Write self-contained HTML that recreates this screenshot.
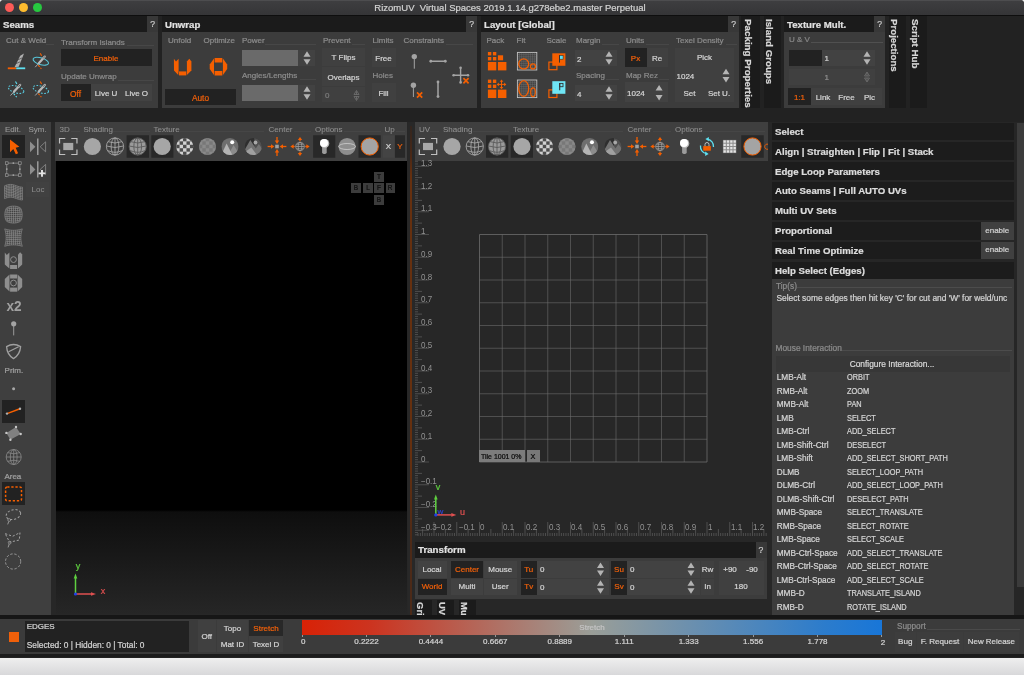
<!DOCTYPE html><html><head><meta charset="utf-8"><title>RizomUV</title>
<style>html,body{margin:0;padding:0;background:#e4e4e6;}#w{position:relative;width:1024px;height:675px;overflow:hidden;font-family:"Liberation Sans", sans-serif;background:#e4e4e6;}#w div,#w svg{position:absolute;box-sizing:border-box;}#w svg{overflow:visible;}#w{will-change:transform;-webkit-font-smoothing:antialiased;-webkit-text-stroke:0.22px;}</style></head><body><div id="w">
<div style="left:0px;top:0px;width:1024px;height:20px;background:#e8e8e8;"></div>
<div style="left:0px;top:657px;width:1024px;height:18px;background:linear-gradient(#f0f0f0,#d8d8da);"></div>
<div style="left:0px;top:0px;width:1024px;height:657.5px;background:#222222;border-radius:4px 4px 0 0;"></div>
<div style="left:0px;top:122px;width:1024px;height:493px;background:#272727;"></div>
<div style="left:0px;top:0px;width:1024px;height:14.8px;background:linear-gradient(#5c5c5e 0,#3e3e40 1px,#353537 100%);border-radius:4px 4px 0 0;"></div>
<div style="left:0px;top:14.8px;width:1024px;height:1.2px;background:#0e0e0e;"></div>
<div style="left:5.4px;top:3.1px;width:9px;height:9px;background:#fc5b57;border-radius:50%;"></div>
<div style="left:19.4px;top:3.1px;width:9px;height:9px;background:#fdbc2e;border-radius:50%;"></div>
<div style="left:33.4px;top:3.1px;width:9px;height:9px;background:#27c840;border-radius:50%;"></div>
<div style="top:0.5px;height:14px;line-height:14px;font-size:9.5px;color:#d2d2d2;white-space:nowrap;left:210px;width:600px;text-align:center;">RizomUV&nbsp; Virtual Spaces 2019.1.14.g278ebe2.master Perpetual</div>
<div style="left:0px;top:16px;width:158px;height:92px;background:#3c3c3c;"></div>
<div style="left:0px;top:16px;width:147px;height:15.75px;background:#1b1b1b;"></div>
<div style="top:17.675px;height:14px;line-height:14px;font-size:9px;color:#e0e0e0;white-space:nowrap;font-weight:700;transform:scaleX(1.07);transform-origin:0 50%;left:3.2px;">Seams</div>
<div style="left:147px;top:16px;width:11px;height:15.75px;background:#383838;"></div>
<div style="top:18.075px;height:12px;line-height:12px;font-size:8.6px;color:#c8c8c8;white-space:nowrap;left:-147.4px;width:600px;text-align:center;">?</div>
<div style="top:34.5px;height:12px;line-height:12px;font-size:8px;color:#8c8c8c;white-space:nowrap;left:6px;">Cut &amp; Weld</div>
<div style="left:46px;top:44px;width:8px;height:1px;background:#474747;"></div>
<div style="top:36.6px;height:12px;line-height:12px;font-size:8px;color:#8c8c8c;white-space:nowrap;left:61px;">Transform Islands</div>
<div style="left:127px;top:45px;width:27px;height:1px;background:#474747;"></div>
<div style="left:60.5px;top:49px;width:91.5px;height:17px;background:#222;"></div>
<div style="top:52.5px;height:12px;line-height:12px;font-size:8px;color:#f0600a;white-space:nowrap;left:-194px;width:600px;text-align:center;">Enable</div>
<div style="top:71.4px;height:12px;line-height:12px;font-size:8px;color:#8c8c8c;white-space:nowrap;left:61px;">Update Unwrap</div>
<div style="left:118px;top:80px;width:36px;height:1px;background:#474747;"></div>
<div style="left:60.5px;top:84px;width:30.5px;height:17px;background:#222;"></div>
<div style="top:87.5px;height:12px;line-height:12px;font-size:8.4px;color:#f0600a;white-space:nowrap;left:-224.5px;width:600px;text-align:center;">Off</div>
<div style="left:91px;top:84px;width:61px;height:17px;background:#424242;"></div>
<div style="top:87.5px;height:12px;line-height:12px;font-size:8px;color:#d4d4d4;white-space:nowrap;left:-194px;width:600px;text-align:center;">Live U</div>
<div style="top:87.5px;height:12px;line-height:12px;font-size:8px;color:#d4d4d4;white-space:nowrap;left:-163.5px;width:600px;text-align:center;">Live O</div>
<div style="left:162px;top:16px;width:315px;height:92px;background:#3c3c3c;"></div>
<div style="left:162px;top:16px;width:304px;height:15.75px;background:#1b1b1b;"></div>
<div style="top:17.675px;height:14px;line-height:14px;font-size:9px;color:#e0e0e0;white-space:nowrap;font-weight:700;transform:scaleX(1.07);transform-origin:0 50%;left:165.2px;">Unwrap</div>
<div style="left:466px;top:16px;width:11px;height:15.75px;background:#383838;"></div>
<div style="top:18.075px;height:12px;line-height:12px;font-size:8.6px;color:#c8c8c8;white-space:nowrap;left:171.60000000000002px;width:600px;text-align:center;">?</div>
<div style="top:34.5px;height:12px;line-height:12px;font-size:8px;color:#8c8c8c;white-space:nowrap;left:168px;">Unfold</div>
<div style="top:34.5px;height:12px;line-height:12px;font-size:8px;color:#8c8c8c;white-space:nowrap;left:203.5px;">Optimize</div>
<div style="top:34.5px;height:12px;line-height:12px;font-size:8px;color:#8c8c8c;white-space:nowrap;left:242px;">Power</div>
<div style="left:265px;top:44px;width:51px;height:1px;background:#474747;"></div>
<div style="left:165px;top:89px;width:71px;height:16px;background:#222;"></div>
<div style="top:92.0px;height:12px;line-height:12px;font-size:8.3px;color:#f0600a;white-space:nowrap;left:-99.5px;width:600px;text-align:center;">Auto</div>
<div style="left:242px;top:50px;width:55.5px;height:15.5px;background:#6a6a6a;"></div>
<div style="left:297.5px;top:50px;width:17px;height:15.5px;background:#424242;"></div>
<svg style="left:0;top:0" width="1024" height="675"><path d="M303.5,56.8 L307,51.3 L310.5,56.8 Z M303.5,59.2 L307,64.7 L310.5,59.2 Z" fill="#b4b4b4"/></svg>
<div style="top:69.5px;height:12px;line-height:12px;font-size:8px;color:#8c8c8c;white-space:nowrap;left:242px;">Angles/Lengths</div>
<div style="left:300px;top:79px;width:16px;height:1px;background:#474747;"></div>
<div style="left:242px;top:85px;width:55.5px;height:15.5px;background:#6a6a6a;"></div>
<div style="left:297.5px;top:85px;width:17px;height:15.5px;background:#424242;"></div>
<svg style="left:0;top:0" width="1024" height="675"><path d="M303.5,91.8 L307,86.3 L310.5,91.8 Z M303.5,94.2 L307,99.7 L310.5,94.2 Z" fill="#b4b4b4"/></svg>
<div style="top:34.5px;height:12px;line-height:12px;font-size:8px;color:#8c8c8c;white-space:nowrap;left:323px;">Prevent</div>
<div style="left:352px;top:44px;width:13px;height:1px;background:#474747;"></div>
<div style="left:322px;top:47.6px;width:43px;height:18.4px;background:#404040;"></div>
<div style="top:51.5px;height:12px;line-height:12px;font-size:8px;color:#d4d4d4;white-space:nowrap;left:43.5px;width:600px;text-align:center;">T Flips</div>
<div style="left:322px;top:67.4px;width:43px;height:18.5px;background:#404040;"></div>
<div style="top:71.5px;height:12px;line-height:12px;font-size:8px;color:#d4d4d4;white-space:nowrap;left:43.5px;width:600px;text-align:center;">Overlaps</div>
<div style="left:322px;top:86.8px;width:43px;height:15.6px;background:#404040;"></div>
<div style="top:89.5px;height:12px;line-height:12px;font-size:8px;color:#7c7c7c;white-space:nowrap;left:325px;">0</div>
<svg style="left:0;top:0" width="1024" height="675"><path d="M354.0,94.5 L356.5,90.5 L359.0,94.5 Z M354.0,96.5 L356.5,100.5 L359.0,96.5 Z M356.5,91.5 V94.5 M356.5,96.5 V99.5" fill="none" stroke="#787878" stroke-width="0.7"/></svg>
<div style="top:34.5px;height:12px;line-height:12px;font-size:8px;color:#8c8c8c;white-space:nowrap;left:372.5px;">Limits</div>
<div style="left:371.5px;top:48.4px;width:24.3px;height:18.5px;background:#404040;"></div>
<div style="top:52.5px;height:12px;line-height:12px;font-size:8px;color:#d4d4d4;white-space:nowrap;left:83.5px;width:600px;text-align:center;">Free</div>
<div style="top:69.5px;height:12px;line-height:12px;font-size:8px;color:#8c8c8c;white-space:nowrap;left:372.5px;">Holes</div>
<div style="left:371.5px;top:82.7px;width:24.3px;height:19.7px;background:#404040;"></div>
<div style="top:87.5px;height:12px;line-height:12px;font-size:8px;color:#d4d4d4;white-space:nowrap;left:83.5px;width:600px;text-align:center;">Fill</div>
<div style="top:34.5px;height:12px;line-height:12px;font-size:8px;color:#8c8c8c;white-space:nowrap;left:403.5px;">Constraints</div>
<div style="left:446px;top:44px;width:27px;height:1px;background:#474747;"></div>
<div style="left:481px;top:16px;width:258px;height:92px;background:#3c3c3c;"></div>
<div style="left:481px;top:16px;width:247px;height:15.75px;background:#1b1b1b;"></div>
<div style="top:17.675px;height:14px;line-height:14px;font-size:9px;color:#e0e0e0;white-space:nowrap;font-weight:700;transform:scaleX(1.07);transform-origin:0 50%;left:484.2px;">Layout [Global]</div>
<div style="left:728px;top:16px;width:11px;height:15.75px;background:#383838;"></div>
<div style="top:18.075px;height:12px;line-height:12px;font-size:8.6px;color:#c8c8c8;white-space:nowrap;left:433.6px;width:600px;text-align:center;">?</div>
<div style="top:34.5px;height:12px;line-height:12px;font-size:8px;color:#8c8c8c;white-space:nowrap;left:486.5px;">Pack</div>
<div style="top:34.5px;height:12px;line-height:12px;font-size:8px;color:#8c8c8c;white-space:nowrap;left:516.5px;">Fit</div>
<div style="top:34.5px;height:12px;line-height:12px;font-size:8px;color:#8c8c8c;white-space:nowrap;left:546.5px;">Scale</div>
<div style="top:34.5px;height:12px;line-height:12px;font-size:8px;color:#8c8c8c;white-space:nowrap;left:576px;">Margin</div>
<div style="left:602px;top:44px;width:17px;height:1px;background:#474747;"></div>
<div style="left:575px;top:50px;width:42px;height:16px;background:#424242;"></div>
<div style="top:53.5px;height:12px;line-height:12px;font-size:8px;color:#d4d4d4;white-space:nowrap;left:577px;">2</div>
<svg style="left:0;top:0" width="1024" height="675"><path d="M605.5,56.8 L609,51.3 L612.5,56.8 Z M605.5,59.2 L609,64.7 L612.5,59.2 Z" fill="#b4b4b4"/></svg>
<div style="top:69.5px;height:12px;line-height:12px;font-size:8px;color:#8c8c8c;white-space:nowrap;left:576px;">Spacing</div>
<div style="left:606px;top:79px;width:13px;height:1px;background:#474747;"></div>
<div style="left:575px;top:85px;width:42px;height:16px;background:#424242;"></div>
<div style="top:88.5px;height:12px;line-height:12px;font-size:8px;color:#d4d4d4;white-space:nowrap;left:577px;">4</div>
<svg style="left:0;top:0" width="1024" height="675"><path d="M605.5,91.8 L609,86.3 L612.5,91.8 Z M605.5,94.2 L609,99.7 L612.5,94.2 Z" fill="#b4b4b4"/></svg>
<div style="top:34.5px;height:12px;line-height:12px;font-size:8px;color:#8c8c8c;white-space:nowrap;left:626px;">Units</div>
<div style="left:646px;top:44px;width:23px;height:1px;background:#474747;"></div>
<div style="left:625px;top:48px;width:21.5px;height:19px;background:#222;"></div>
<div style="top:52.5px;height:12px;line-height:12px;font-size:8px;color:#f0600a;white-space:nowrap;left:335.5px;width:600px;text-align:center;">Px</div>
<div style="left:646.5px;top:48px;width:21.5px;height:19px;background:#404040;"></div>
<div style="top:52.5px;height:12px;line-height:12px;font-size:8px;color:#d4d4d4;white-space:nowrap;left:357px;width:600px;text-align:center;">Re</div>
<div style="top:69.5px;height:12px;line-height:12px;font-size:8px;color:#8c8c8c;white-space:nowrap;left:626px;">Map Rez</div>
<div style="left:659px;top:79px;width:10px;height:1px;background:#474747;"></div>
<div style="left:625px;top:82.4px;width:42.5px;height:20px;background:#424242;"></div>
<div style="top:88.3px;height:12px;line-height:12px;font-size:8px;color:#d4d4d4;white-space:nowrap;left:627px;">1024</div>
<svg style="left:0;top:0" width="1024" height="675"><path d="M655.6,90.4 L659.1,84.9 L662.6,90.4 Z M655.6,95.0 L659.1,100.5 L662.6,95.0 Z" fill="#b4b4b4"/></svg>
<div style="top:34.5px;height:12px;line-height:12px;font-size:8px;color:#8c8c8c;white-space:nowrap;left:676px;">Texel Density</div>
<div style="left:726px;top:44px;width:11px;height:1px;background:#474747;"></div>
<div style="left:675px;top:47.6px;width:59.3px;height:54.6px;background:#404040;"></div>
<div style="top:52.0px;height:12px;line-height:12px;font-size:8px;color:#d4d4d4;white-space:nowrap;left:404.5px;width:600px;text-align:center;">Pick</div>
<div style="top:71.0px;height:12px;line-height:12px;font-size:8px;color:#d4d4d4;white-space:nowrap;left:676.5px;">1024</div>
<svg style="left:0;top:0" width="1024" height="675"><path d="M722.5,74.3 L726,68.8 L729.5,74.3 Z M722.5,77.10000000000001 L726,82.60000000000001 L729.5,77.10000000000001 Z" fill="#b4b4b4"/></svg>
<div style="top:87.5px;height:12px;line-height:12px;font-size:8px;color:#d4d4d4;white-space:nowrap;left:389.5px;width:600px;text-align:center;">Set</div>
<div style="top:87.5px;height:12px;line-height:12px;font-size:8px;color:#d4d4d4;white-space:nowrap;left:419px;width:600px;text-align:center;">Set U.</div>
<div style="left:741px;top:16px;width:19px;height:92px;background:#1b1b1b;"></div>
<div style="left:748.3px;top:19px;font-size:9.8px;color:#d8d8d8;font-weight:700;white-space:nowrap;line-height:12px;height:12px;transform-origin:0 0;transform:rotate(90deg) translate(0,-6px);">Packing Properties</div>
<div style="left:764px;top:16px;width:17px;height:92px;background:#1b1b1b;"></div>
<div style="left:769px;top:19px;font-size:9.7px;color:#d8d8d8;font-weight:700;white-space:nowrap;line-height:12px;height:12px;transform-origin:0 0;transform:rotate(90deg) translate(0,-6px);">Island Groups</div>
<div style="left:784px;top:16px;width:101px;height:92px;background:#3c3c3c;"></div>
<div style="left:784px;top:16px;width:90px;height:15.75px;background:#1b1b1b;"></div>
<div style="top:17.675px;height:14px;line-height:14px;font-size:9px;color:#e0e0e0;white-space:nowrap;font-weight:700;transform:scaleX(1.07);transform-origin:0 50%;left:787.2px;">Texture Mult.</div>
<div style="left:874px;top:16px;width:11px;height:15.75px;background:#383838;"></div>
<div style="top:18.075px;height:12px;line-height:12px;font-size:8.6px;color:#c8c8c8;white-space:nowrap;left:579.6px;width:600px;text-align:center;">?</div>
<div style="top:33.5px;height:12px;line-height:12px;font-size:8px;color:#868686;white-space:nowrap;left:789px;">U &amp; V</div>
<div style="left:811px;top:42px;width:72px;height:1px;background:#505050;"></div>
<div style="left:788.5px;top:50px;width:86.5px;height:16px;background:#424242;"></div>
<div style="left:788.5px;top:50px;width:33px;height:16px;background:#222;"></div>
<div style="top:53.0px;height:12px;line-height:12px;font-size:8px;color:#d4d4d4;white-space:nowrap;left:824.5px;">1</div>
<svg style="left:0;top:0" width="1024" height="675"><path d="M863.5,56.8 L867,51.3 L870.5,56.8 Z M863.5,59.2 L867,64.7 L870.5,59.2 Z" fill="#b4b4b4"/></svg>
<div style="left:788.5px;top:69px;width:86.5px;height:16px;background:#404040;"></div>
<div style="top:71.8px;height:12px;line-height:12px;font-size:8px;color:#909090;white-space:nowrap;left:824.5px;">1</div>
<svg style="left:0;top:0" width="1024" height="675"><path d="M864.5,76 L867,72 L869.5,76 Z M864.5,78 L867,82 L869.5,78 Z M867,73 V76 M867,78 V81" fill="none" stroke="#787878" stroke-width="0.7"/></svg>
<div style="left:788px;top:88px;width:93.8px;height:17px;background:#404040;"></div>
<div style="left:788px;top:88px;width:23px;height:17px;background:#222;"></div>
<div style="top:91.5px;height:12px;line-height:12px;font-size:8px;color:#f0600a;white-space:nowrap;left:499.5px;width:600px;text-align:center;">1:1</div>
<div style="top:91.5px;height:12px;line-height:12px;font-size:8px;color:#d4d4d4;white-space:nowrap;left:523px;width:600px;text-align:center;">Link</div>
<div style="top:91.5px;height:12px;line-height:12px;font-size:8px;color:#d4d4d4;white-space:nowrap;left:546.5px;width:600px;text-align:center;">Free</div>
<div style="top:91.5px;height:12px;line-height:12px;font-size:8px;color:#d4d4d4;white-space:nowrap;left:569.5px;width:600px;text-align:center;">Pic</div>
<div style="left:889px;top:16px;width:17px;height:92px;background:#1b1b1b;"></div>
<div style="left:894px;top:19px;font-size:9.7px;color:#d8d8d8;font-weight:700;white-space:nowrap;line-height:12px;height:12px;transform-origin:0 0;transform:rotate(90deg) translate(0,-6px);">Projections</div>
<div style="left:909.7px;top:16px;width:17px;height:92px;background:#1b1b1b;"></div>
<div style="left:915.3px;top:19px;font-size:9.8px;color:#d8d8d8;font-weight:700;white-space:nowrap;line-height:12px;height:12px;transform-origin:0 0;transform:rotate(90deg) translate(0,-6px);">Script Hub</div>
<div style="left:0px;top:122px;width:51px;height:493px;background:#3f3f3f;"></div>
<div style="top:123.6px;height:12px;line-height:12px;font-size:8px;color:#9a9a9a;white-space:nowrap;left:5px;-webkit-text-stroke:0.1px;">Edit.</div>
<div style="top:123.6px;height:12px;line-height:12px;font-size:8px;color:#9a9a9a;white-space:nowrap;left:28.5px;-webkit-text-stroke:0.1px;">Sym.</div>
<div style="left:2px;top:135px;width:23px;height:23px;background:#222;"></div>
<div style="left:26.4px;top:182.3px;width:23px;height:14.3px;background:#414141;"></div>
<div style="top:183.6px;height:12px;line-height:12px;font-size:8px;color:#8e8e8e;white-space:nowrap;left:-262px;width:600px;text-align:center;-webkit-text-stroke:0;">Loc</div>
<div style="top:365.3px;height:12px;line-height:12px;font-size:8px;color:#a0a0a0;white-space:nowrap;left:4.6px;">Prim.</div>
<div style="top:470.6px;height:12px;line-height:12px;font-size:8px;color:#a0a0a0;white-space:nowrap;left:4.4px;">Area</div>
<div style="left:2px;top:400px;width:23px;height:22.5px;background:#222;"></div>
<div style="left:2px;top:482.3px;width:23px;height:22.6px;background:#222;"></div>
<div style="top:296.6px;height:18px;line-height:18px;font-size:15.3px;color:#a0a0a0;white-space:nowrap;font-weight:700;transform:scaleX(0.89);transform-origin:50% 50%;left:-286.3px;width:600px;text-align:center;-webkit-text-stroke:0;">x2</div>
<div style="left:54.7px;top:122px;width:352.7px;height:39px;background:#3f3f3f;"></div>
<div style="left:55.8px;top:160.5px;width:350.8px;height:453.5px;background:linear-gradient(#000 0,#000 349px,#0e0e0e 351px,#262626 100%);"></div>
<div style="top:123.6px;height:12px;line-height:12px;font-size:8px;color:#8e8e8e;white-space:nowrap;left:59.5px;-webkit-text-stroke:0.1px;">3D</div>
<div style="top:123.6px;height:12px;line-height:12px;font-size:8px;color:#8e8e8e;white-space:nowrap;left:83.5px;-webkit-text-stroke:0.1px;">Shading</div>
<div style="top:123.6px;height:12px;line-height:12px;font-size:8px;color:#8e8e8e;white-space:nowrap;left:153.5px;-webkit-text-stroke:0.1px;">Texture</div>
<div style="top:123.6px;height:12px;line-height:12px;font-size:8px;color:#8e8e8e;white-space:nowrap;left:268.5px;-webkit-text-stroke:0.1px;">Center</div>
<div style="top:123.6px;height:12px;line-height:12px;font-size:8px;color:#8e8e8e;white-space:nowrap;left:315px;-webkit-text-stroke:0.1px;">Options</div>
<div style="top:123.6px;height:12px;line-height:12px;font-size:8px;color:#8e8e8e;white-space:nowrap;left:384.5px;-webkit-text-stroke:0.1px;">Up</div>
<div style="left:70.75px;top:131px;width:8.75px;height:1px;background:#464646;"></div>
<div style="left:113px;top:131px;width:36.5px;height:1px;background:#464646;"></div>
<div style="left:180px;top:131px;width:83.75px;height:1px;background:#464646;"></div>
<div style="left:293.75px;top:131px;width:17.25px;height:1px;background:#464646;"></div>
<div style="left:343.75px;top:131px;width:37.25px;height:1px;background:#464646;"></div>
<div style="left:395.6px;top:131px;width:9.399999999999977px;height:1px;background:#464646;"></div>
<div style="left:374px;top:171.8px;width:10px;height:10.1px;background:#3c3c3c;"></div>
<div style="top:171.05px;height:12px;line-height:12px;font-size:7.6px;color:#0c0c0c;white-space:nowrap;transform:scaleX(0.85);transform-origin:50% 50%;left:79.0px;width:600px;text-align:center;">T</div>
<div style="left:351.3px;top:183.3px;width:9.7px;height:9.9px;background:#3c3c3c;"></div>
<div style="top:182.45px;height:12px;line-height:12px;font-size:7.6px;color:#0c0c0c;white-space:nowrap;transform:scaleX(0.85);transform-origin:50% 50%;left:56.150000000000034px;width:600px;text-align:center;">B</div>
<div style="left:362.9px;top:183.3px;width:9.7px;height:9.9px;background:#3c3c3c;"></div>
<div style="top:182.45px;height:12px;line-height:12px;font-size:7.6px;color:#0c0c0c;white-space:nowrap;transform:scaleX(0.85);transform-origin:50% 50%;left:67.75px;width:600px;text-align:center;">L</div>
<div style="left:374px;top:183.3px;width:10px;height:9.9px;background:#3c3c3c;"></div>
<div style="top:182.45px;height:12px;line-height:12px;font-size:7.6px;color:#0c0c0c;white-space:nowrap;transform:scaleX(0.85);transform-origin:50% 50%;left:79.0px;width:600px;text-align:center;">F</div>
<div style="left:385.7px;top:183.3px;width:9.5px;height:9.9px;background:#3c3c3c;"></div>
<div style="top:182.45px;height:12px;line-height:12px;font-size:7.6px;color:#0c0c0c;white-space:nowrap;transform:scaleX(0.85);transform-origin:50% 50%;left:90.44999999999999px;width:600px;text-align:center;">R</div>
<div style="left:374px;top:194.9px;width:10px;height:9.9px;background:#3c3c3c;"></div>
<div style="top:194.04999999999998px;height:12px;line-height:12px;font-size:7.6px;color:#0c0c0c;white-space:nowrap;transform:scaleX(0.85);transform-origin:50% 50%;left:79.0px;width:600px;text-align:center;">B</div>
<div style="left:414.7px;top:122px;width:353.4px;height:39px;background:#3f3f3f;"></div>
<div style="left:414.7px;top:160.5px;width:353.4px;height:376px;background:#272727;"></div>
<div style="left:407.5px;top:122px;width:7px;height:493px;background:#282828;"></div>
<div style="left:410.2px;top:126px;width:2px;height:489px;background:linear-gradient(#33261f 0,#4a2816 30px,#66300f 50px,#66300f 330px,#4c2a18 420px);"></div>
<div style="top:123.6px;height:12px;line-height:12px;font-size:8px;color:#8e8e8e;white-space:nowrap;left:419px;-webkit-text-stroke:0.1px;">UV</div>
<div style="top:123.6px;height:12px;line-height:12px;font-size:8px;color:#8e8e8e;white-space:nowrap;left:443px;-webkit-text-stroke:0.1px;">Shading</div>
<div style="top:123.6px;height:12px;line-height:12px;font-size:8px;color:#8e8e8e;white-space:nowrap;left:513px;-webkit-text-stroke:0.1px;">Texture</div>
<div style="top:123.6px;height:12px;line-height:12px;font-size:8px;color:#8e8e8e;white-space:nowrap;left:627.5px;-webkit-text-stroke:0.1px;">Center</div>
<div style="top:123.6px;height:12px;line-height:12px;font-size:8px;color:#8e8e8e;white-space:nowrap;left:675px;-webkit-text-stroke:0.1px;">Options</div>
<div style="left:430px;top:131px;width:9px;height:1px;background:#464646;"></div>
<div style="left:472.5px;top:131px;width:36.5px;height:1px;background:#464646;"></div>
<div style="left:539.5px;top:131px;width:83.5px;height:1px;background:#464646;"></div>
<div style="left:653px;top:131px;width:18px;height:1px;background:#464646;"></div>
<div style="left:703px;top:131px;width:62px;height:1px;background:#464646;"></div>
<svg style="left:0;top:0" width="1024" height="675"><path d="M479.5,234.5 V462.0 M479.5,234.5 H707.0" stroke="#6c6c6c" stroke-width="0.8" fill="none"/><path d="M502.25,234.5 V462.0 M479.5,257.25 H707.0" stroke="#6c6c6c" stroke-width="0.6" fill="none"/><path d="M525.0,234.5 V462.0 M479.5,280.0 H707.0" stroke="#6c6c6c" stroke-width="0.6" fill="none"/><path d="M547.75,234.5 V462.0 M479.5,302.75 H707.0" stroke="#6c6c6c" stroke-width="0.6" fill="none"/><path d="M570.5,234.5 V462.0 M479.5,325.5 H707.0" stroke="#6c6c6c" stroke-width="0.6" fill="none"/><path d="M593.25,234.5 V462.0 M479.5,348.25 H707.0" stroke="#6c6c6c" stroke-width="0.6" fill="none"/><path d="M616.0,234.5 V462.0 M479.5,371.0 H707.0" stroke="#6c6c6c" stroke-width="0.6" fill="none"/><path d="M638.75,234.5 V462.0 M479.5,393.75 H707.0" stroke="#6c6c6c" stroke-width="0.6" fill="none"/><path d="M661.5,234.5 V462.0 M479.5,416.5 H707.0" stroke="#6c6c6c" stroke-width="0.6" fill="none"/><path d="M684.25,234.5 V462.0 M479.5,439.25 H707.0" stroke="#6c6c6c" stroke-width="0.6" fill="none"/><path d="M707.0,234.5 V462.0 M479.5,462.0 H707.0" stroke="#6c6c6c" stroke-width="0.8" fill="none"/></svg>
<div style="left:479.1px;top:450px;width:46.4px;height:11.7px;background:#7c7c7c;"></div>
<div style="top:452.0px;height:10px;line-height:10px;font-size:7.2px;color:#0a0a0a;white-space:nowrap;transform:scaleX(0.97);transform-origin:0 50%;left:481.2px;">Tile 1001 0%</div>
<div style="left:526.5px;top:450px;width:13.1px;height:11.7px;background:#787878;"></div>
<div style="top:452.0px;height:10px;line-height:10px;font-size:7.3px;color:#0a0a0a;white-space:nowrap;left:233px;width:600px;text-align:center;">X</div>
<svg style="left:0;top:0" width="1024" height="675"><path d="M415,534.80 h3 M415,532.53 h3 M415,530.25 h14 M415,527.98 h3 M415,525.70 h3 M415,523.42 h3 M415,521.15 h3 M415,518.88 h7 M415,516.60 h3 M415,514.33 h3 M415,512.05 h3 M415,509.77 h3 M415,507.50 h14 M415,505.22 h3 M415,502.95 h3 M415,500.68 h3 M415,498.40 h3 M415,496.12 h7 M415,493.85 h3 M415,491.57 h3 M415,489.30 h3 M415,487.03 h3 M415,484.75 h14 M415,482.48 h3 M415,480.20 h3 M415,477.93 h3 M415,475.65 h3 M415,473.38 h7 M415,471.10 h3 M415,468.83 h3 M415,466.55 h3 M415,464.27 h3 M415,462.00 h14 M415,459.73 h3 M415,457.45 h3 M415,455.17 h3 M415,452.90 h3 M415,450.62 h7 M415,448.35 h3 M415,446.07 h3 M415,443.80 h3 M415,441.52 h3 M415,439.25 h14 M415,436.98 h3 M415,434.70 h3 M415,432.42 h3 M415,430.15 h3 M415,427.88 h7 M415,425.60 h3 M415,423.32 h3 M415,421.05 h3 M415,418.78 h3 M415,416.50 h14 M415,414.23 h3 M415,411.95 h3 M415,409.68 h3 M415,407.40 h3 M415,405.12 h7 M415,402.85 h3 M415,400.57 h3 M415,398.30 h3 M415,396.02 h3 M415,393.75 h14 M415,391.48 h3 M415,389.20 h3 M415,386.92 h3 M415,384.65 h3 M415,382.38 h7 M415,380.10 h3 M415,377.82 h3 M415,375.55 h3 M415,373.27 h3 M415,371.00 h14 M415,368.73 h3 M415,366.45 h3 M415,364.18 h3 M415,361.90 h3 M415,359.62 h7 M415,357.35 h3 M415,355.08 h3 M415,352.80 h3 M415,350.52 h3 M415,348.25 h14 M415,345.98 h3 M415,343.70 h3 M415,341.42 h3 M415,339.15 h3 M415,336.88 h7 M415,334.60 h3 M415,332.33 h3 M415,330.05 h3 M415,327.77 h3 M415,325.50 h14 M415,323.23 h3 M415,320.95 h3 M415,318.68 h3 M415,316.40 h3 M415,314.12 h7 M415,311.85 h3 M415,309.57 h3 M415,307.30 h3 M415,305.02 h3 M415,302.75 h14 M415,300.48 h3 M415,298.20 h3 M415,295.93 h3 M415,293.65 h3 M415,291.38 h7 M415,289.10 h3 M415,286.82 h3 M415,284.55 h3 M415,282.27 h3 M415,280.00 h14 M415,277.72 h3 M415,275.45 h3 M415,273.18 h3 M415,270.90 h3 M415,268.62 h7 M415,266.35 h3 M415,264.07 h3 M415,261.80 h3 M415,259.52 h3 M415,257.25 h14 M415,254.97 h3 M415,252.70 h3 M415,250.42 h3 M415,248.15 h3 M415,245.88 h7 M415,243.60 h3 M415,241.33 h3 M415,239.05 h3 M415,236.78 h3 M415,234.50 h14 M415,232.22 h3 M415,229.95 h3 M415,227.67 h3 M415,225.40 h3 M415,223.12 h7 M415,220.85 h3 M415,218.57 h3 M415,216.30 h3 M415,214.02 h3 M415,211.75 h14 M415,209.47 h3 M415,207.20 h3 M415,204.93 h3 M415,202.65 h3 M415,200.38 h7 M415,198.10 h3 M415,195.83 h3 M415,193.55 h3 M415,191.28 h3 M415,189.00 h14 M415,186.73 h3 M415,184.45 h3 M415,182.18 h3 M415,179.90 h3 M415,177.62 h7 M415,175.35 h3 M415,173.07 h3 M415,170.80 h3 M415,168.52 h3 M415,166.25 h14 M415,163.97 h3 M415,161.70 h3 M418.07,536 v-3 M420.35,536 v-3 M422.62,536 v-7 M424.90,536 v-3 M427.18,536 v-3 M429.45,536 v-3 M431.73,536 v-3 M434.00,536 v-14 M436.27,536 v-3 M438.55,536 v-3 M440.82,536 v-3 M443.10,536 v-3 M445.38,536 v-7 M447.65,536 v-3 M449.93,536 v-3 M452.20,536 v-3 M454.48,536 v-3 M456.75,536 v-14 M459.02,536 v-3 M461.30,536 v-3 M463.57,536 v-3 M465.85,536 v-3 M468.12,536 v-7 M470.40,536 v-3 M472.68,536 v-3 M474.95,536 v-3 M477.23,536 v-3 M479.50,536 v-14 M481.77,536 v-3 M484.05,536 v-3 M486.32,536 v-3 M488.60,536 v-3 M490.88,536 v-7 M493.15,536 v-3 M495.43,536 v-3 M497.70,536 v-3 M499.98,536 v-3 M502.25,536 v-14 M504.52,536 v-3 M506.80,536 v-3 M509.07,536 v-3 M511.35,536 v-3 M513.62,536 v-7 M515.90,536 v-3 M518.17,536 v-3 M520.45,536 v-3 M522.73,536 v-3 M525.00,536 v-14 M527.27,536 v-3 M529.55,536 v-3 M531.83,536 v-3 M534.10,536 v-3 M536.38,536 v-7 M538.65,536 v-3 M540.92,536 v-3 M543.20,536 v-3 M545.48,536 v-3 M547.75,536 v-14 M550.02,536 v-3 M552.30,536 v-3 M554.58,536 v-3 M556.85,536 v-3 M559.12,536 v-7 M561.40,536 v-3 M563.67,536 v-3 M565.95,536 v-3 M568.23,536 v-3 M570.50,536 v-14 M572.77,536 v-3 M575.05,536 v-3 M577.33,536 v-3 M579.60,536 v-3 M581.88,536 v-7 M584.15,536 v-3 M586.42,536 v-3 M588.70,536 v-3 M590.98,536 v-3 M593.25,536 v-14 M595.52,536 v-3 M597.80,536 v-3 M600.08,536 v-3 M602.35,536 v-3 M604.62,536 v-7 M606.90,536 v-3 M609.17,536 v-3 M611.45,536 v-3 M613.73,536 v-3 M616.00,536 v-14 M618.27,536 v-3 M620.55,536 v-3 M622.83,536 v-3 M625.10,536 v-3 M627.38,536 v-7 M629.65,536 v-3 M631.92,536 v-3 M634.20,536 v-3 M636.48,536 v-3 M638.75,536 v-14 M641.02,536 v-3 M643.30,536 v-3 M645.58,536 v-3 M647.85,536 v-3 M650.12,536 v-7 M652.40,536 v-3 M654.67,536 v-3 M656.95,536 v-3 M659.23,536 v-3 M661.50,536 v-14 M663.78,536 v-3 M666.05,536 v-3 M668.33,536 v-3 M670.60,536 v-3 M672.88,536 v-7 M675.15,536 v-3 M677.42,536 v-3 M679.70,536 v-3 M681.98,536 v-3 M684.25,536 v-14 M686.52,536 v-3 M688.80,536 v-3 M691.08,536 v-3 M693.35,536 v-3 M695.62,536 v-7 M697.90,536 v-3 M700.17,536 v-3 M702.45,536 v-3 M704.73,536 v-3 M707.00,536 v-14 M709.27,536 v-3 M711.55,536 v-3 M713.83,536 v-3 M716.10,536 v-3 M718.38,536 v-7 M720.65,536 v-3 M722.92,536 v-3 M725.20,536 v-3 M727.48,536 v-3 M729.75,536 v-14 M732.03,536 v-3 M734.30,536 v-3 M736.58,536 v-3 M738.85,536 v-3 M741.12,536 v-7 M743.40,536 v-3 M745.67,536 v-3 M747.95,536 v-3 M750.22,536 v-3 M752.50,536 v-14 M754.77,536 v-3 M757.05,536 v-3 M759.33,536 v-3 M761.60,536 v-3 M763.88,536 v-7 M766.15,536 v-3 " stroke="#606060" stroke-width="0.7" fill="none"/></svg>
<div style="top:499.0px;height:10px;line-height:10px;font-size:8.5px;color:#929292;white-space:nowrap;transform:scaleX(0.94);transform-origin:0 50%;left:421.3px;-webkit-text-stroke:0;">−0.2</div>
<div style="top:476.25px;height:10px;line-height:10px;font-size:8.5px;color:#929292;white-space:nowrap;transform:scaleX(0.94);transform-origin:0 50%;left:421.3px;-webkit-text-stroke:0;">−0.1</div>
<div style="top:453.5px;height:10px;line-height:10px;font-size:8.5px;color:#929292;white-space:nowrap;transform:scaleX(0.94);transform-origin:0 50%;left:420.8px;-webkit-text-stroke:0;">0</div>
<div style="top:430.75px;height:10px;line-height:10px;font-size:8.5px;color:#929292;white-space:nowrap;transform:scaleX(0.94);transform-origin:0 50%;left:420.8px;-webkit-text-stroke:0;">0.1</div>
<div style="top:408.0px;height:10px;line-height:10px;font-size:8.5px;color:#929292;white-space:nowrap;transform:scaleX(0.94);transform-origin:0 50%;left:420.8px;-webkit-text-stroke:0;">0.2</div>
<div style="top:385.25px;height:10px;line-height:10px;font-size:8.5px;color:#929292;white-space:nowrap;transform:scaleX(0.94);transform-origin:0 50%;left:420.8px;-webkit-text-stroke:0;">0.3</div>
<div style="top:362.5px;height:10px;line-height:10px;font-size:8.5px;color:#929292;white-space:nowrap;transform:scaleX(0.94);transform-origin:0 50%;left:420.8px;-webkit-text-stroke:0;">0.4</div>
<div style="top:339.75px;height:10px;line-height:10px;font-size:8.5px;color:#929292;white-space:nowrap;transform:scaleX(0.94);transform-origin:0 50%;left:420.8px;-webkit-text-stroke:0;">0.5</div>
<div style="top:317.0px;height:10px;line-height:10px;font-size:8.5px;color:#929292;white-space:nowrap;transform:scaleX(0.94);transform-origin:0 50%;left:420.8px;-webkit-text-stroke:0;">0.6</div>
<div style="top:294.25px;height:10px;line-height:10px;font-size:8.5px;color:#929292;white-space:nowrap;transform:scaleX(0.94);transform-origin:0 50%;left:420.8px;-webkit-text-stroke:0;">0.7</div>
<div style="top:271.5px;height:10px;line-height:10px;font-size:8.5px;color:#929292;white-space:nowrap;transform:scaleX(0.94);transform-origin:0 50%;left:420.8px;-webkit-text-stroke:0;">0.8</div>
<div style="top:248.75px;height:10px;line-height:10px;font-size:8.5px;color:#929292;white-space:nowrap;transform:scaleX(0.94);transform-origin:0 50%;left:420.8px;-webkit-text-stroke:0;">0.9</div>
<div style="top:226.0px;height:10px;line-height:10px;font-size:8.5px;color:#929292;white-space:nowrap;transform:scaleX(0.94);transform-origin:0 50%;left:420.8px;-webkit-text-stroke:0;">1</div>
<div style="top:203.24999999999997px;height:10px;line-height:10px;font-size:8.5px;color:#929292;white-space:nowrap;transform:scaleX(0.94);transform-origin:0 50%;left:420.8px;-webkit-text-stroke:0;">1.1</div>
<div style="top:180.5px;height:10px;line-height:10px;font-size:8.5px;color:#929292;white-space:nowrap;transform:scaleX(0.94);transform-origin:0 50%;left:420.8px;-webkit-text-stroke:0;">1.2</div>
<div style="top:157.75px;height:10px;line-height:10px;font-size:8.5px;color:#929292;white-space:nowrap;transform:scaleX(0.94);transform-origin:0 50%;left:420.8px;-webkit-text-stroke:0;">1.3</div>
<div style="top:521.8px;height:10px;line-height:10px;font-size:8.5px;color:#929292;white-space:nowrap;transform:scaleX(0.94);transform-origin:0 50%;left:421px;-webkit-text-stroke:0;">−0.3</div>
<div style="top:521.8px;height:10px;line-height:10px;font-size:8.5px;color:#929292;white-space:nowrap;transform:scaleX(0.94);transform-origin:0 50%;left:436.0px;-webkit-text-stroke:0;">−0.2</div>
<div style="top:521.8px;height:10px;line-height:10px;font-size:8.5px;color:#929292;white-space:nowrap;transform:scaleX(0.94);transform-origin:0 50%;left:458.75px;-webkit-text-stroke:0;">−0.1</div>
<div style="top:521.8px;height:10px;line-height:10px;font-size:8.5px;color:#929292;white-space:nowrap;transform:scaleX(0.94);transform-origin:0 50%;left:480.3px;-webkit-text-stroke:0;">0</div>
<div style="top:521.8px;height:10px;line-height:10px;font-size:8.5px;color:#929292;white-space:nowrap;transform:scaleX(0.94);transform-origin:0 50%;left:503.05px;-webkit-text-stroke:0;">0.1</div>
<div style="top:521.8px;height:10px;line-height:10px;font-size:8.5px;color:#929292;white-space:nowrap;transform:scaleX(0.94);transform-origin:0 50%;left:525.8px;-webkit-text-stroke:0;">0.2</div>
<div style="top:521.8px;height:10px;line-height:10px;font-size:8.5px;color:#929292;white-space:nowrap;transform:scaleX(0.94);transform-origin:0 50%;left:548.55px;-webkit-text-stroke:0;">0.3</div>
<div style="top:521.8px;height:10px;line-height:10px;font-size:8.5px;color:#929292;white-space:nowrap;transform:scaleX(0.94);transform-origin:0 50%;left:571.3px;-webkit-text-stroke:0;">0.4</div>
<div style="top:521.8px;height:10px;line-height:10px;font-size:8.5px;color:#929292;white-space:nowrap;transform:scaleX(0.94);transform-origin:0 50%;left:594.05px;-webkit-text-stroke:0;">0.5</div>
<div style="top:521.8px;height:10px;line-height:10px;font-size:8.5px;color:#929292;white-space:nowrap;transform:scaleX(0.94);transform-origin:0 50%;left:616.8px;-webkit-text-stroke:0;">0.6</div>
<div style="top:521.8px;height:10px;line-height:10px;font-size:8.5px;color:#929292;white-space:nowrap;transform:scaleX(0.94);transform-origin:0 50%;left:639.55px;-webkit-text-stroke:0;">0.7</div>
<div style="top:521.8px;height:10px;line-height:10px;font-size:8.5px;color:#929292;white-space:nowrap;transform:scaleX(0.94);transform-origin:0 50%;left:662.3px;-webkit-text-stroke:0;">0.8</div>
<div style="top:521.8px;height:10px;line-height:10px;font-size:8.5px;color:#929292;white-space:nowrap;transform:scaleX(0.94);transform-origin:0 50%;left:685.05px;-webkit-text-stroke:0;">0.9</div>
<div style="top:521.8px;height:10px;line-height:10px;font-size:8.5px;color:#929292;white-space:nowrap;transform:scaleX(0.94);transform-origin:0 50%;left:707.8px;-webkit-text-stroke:0;">1</div>
<div style="top:521.8px;height:10px;line-height:10px;font-size:8.5px;color:#929292;white-space:nowrap;transform:scaleX(0.94);transform-origin:0 50%;left:730.55px;-webkit-text-stroke:0;">1.1</div>
<div style="top:521.8px;height:10px;line-height:10px;font-size:8.5px;color:#929292;white-space:nowrap;transform:scaleX(0.94);transform-origin:0 50%;left:753.3px;-webkit-text-stroke:0;">1.2</div>
<div style="left:771.5px;top:122px;width:242px;height:494px;background:#262626;"></div>
<div style="left:771.5px;top:122.5px;width:242px;height:17.5px;background:#1c1c1c;"></div>
<div style="top:124.69999999999999px;height:14px;line-height:14px;font-size:9px;color:#dcdcdc;white-space:nowrap;font-weight:700;transform:scaleX(1.07);transform-origin:0 50%;left:774.7px;">Select</div>
<div style="left:771.5px;top:142.4px;width:242px;height:17.5px;background:#1c1c1c;"></div>
<div style="top:144.6px;height:14px;line-height:14px;font-size:9px;color:#dcdcdc;white-space:nowrap;font-weight:700;transform:scaleX(1.07);transform-origin:0 50%;left:774.7px;">Align | Straighten | Flip | Fit | Stack</div>
<div style="left:771.5px;top:162.3px;width:242px;height:17.5px;background:#1c1c1c;"></div>
<div style="top:164.5px;height:14px;line-height:14px;font-size:9px;color:#dcdcdc;white-space:nowrap;font-weight:700;transform:scaleX(1.07);transform-origin:0 50%;left:774.7px;">Edge Loop Parameters</div>
<div style="left:771.5px;top:182.2px;width:242px;height:17.5px;background:#1c1c1c;"></div>
<div style="top:184.39999999999998px;height:14px;line-height:14px;font-size:9px;color:#dcdcdc;white-space:nowrap;font-weight:700;transform:scaleX(1.07);transform-origin:0 50%;left:774.7px;">Auto Seams | Full AUTO UVs</div>
<div style="left:771.5px;top:202.1px;width:242px;height:17.5px;background:#1c1c1c;"></div>
<div style="top:204.29999999999998px;height:14px;line-height:14px;font-size:9px;color:#dcdcdc;white-space:nowrap;font-weight:700;transform:scaleX(1.07);transform-origin:0 50%;left:774.7px;">Multi UV Sets</div>
<div style="left:771.5px;top:222.0px;width:242px;height:17.5px;background:#1c1c1c;"></div>
<div style="top:224.2px;height:14px;line-height:14px;font-size:9px;color:#dcdcdc;white-space:nowrap;font-weight:700;transform:scaleX(1.07);transform-origin:0 50%;left:774.7px;">Proportional</div>
<div style="left:981px;top:222.0px;width:32.5px;height:17.5px;background:#404040;"></div>
<div style="top:224.5px;height:12px;line-height:12px;font-size:8px;color:#d0d0d0;white-space:nowrap;left:697.25px;width:600px;text-align:center;">enable</div>
<div style="left:771.5px;top:241.89999999999998px;width:242px;height:17.5px;background:#1c1c1c;"></div>
<div style="top:244.09999999999997px;height:14px;line-height:14px;font-size:9px;color:#dcdcdc;white-space:nowrap;font-weight:700;transform:scaleX(1.07);transform-origin:0 50%;left:774.7px;">Real Time Optimize</div>
<div style="left:981px;top:241.89999999999998px;width:32.5px;height:17.5px;background:#404040;"></div>
<div style="top:244.39999999999998px;height:12px;line-height:12px;font-size:8px;color:#d0d0d0;white-space:nowrap;left:697.25px;width:600px;text-align:center;">enable</div>
<div style="left:771.5px;top:261.79999999999995px;width:242px;height:17.5px;background:#1c1c1c;"></div>
<div style="top:263.99999999999994px;height:14px;line-height:14px;font-size:9px;color:#dcdcdc;white-space:nowrap;font-weight:700;transform:scaleX(1.07);transform-origin:0 50%;left:774.7px;">Help Select (Edges)</div>
<div style="left:1013.5px;top:122px;width:10.5px;height:493px;background:#262626;"></div>
<div style="left:1017px;top:122.5px;width:7px;height:464px;background:#3b3b3b;"></div>
<div style="left:771.5px;top:278.5px;width:242px;height:336px;background:#3c3c3c;"></div>
<div style="top:279.5px;height:12px;line-height:12px;font-size:8.3px;color:#8c8c8c;white-space:nowrap;left:776px;">Tip(s)</div>
<div style="left:797px;top:287px;width:215px;height:1px;background:#4c4c4c;"></div>
<div style="top:291.5px;height:12px;line-height:12px;font-size:8.4px;color:#d4d4d4;white-space:nowrap;left:776.5px;width:232px;overflow:hidden;">Select some edges then hit key 'C' for cut and 'W' for weld/unc</div>
<div style="top:342.0px;height:12px;line-height:12px;font-size:8.35px;color:#8c8c8c;white-space:nowrap;left:775.5px;">Mouse Interaction</div>
<div style="left:842px;top:350px;width:170px;height:1px;background:#4c4c4c;"></div>
<div style="left:775.5px;top:355.5px;width:234.5px;height:16px;background:#373737;"></div>
<div style="top:357.5px;height:12px;line-height:12px;font-size:8.4px;color:#d8d8d8;white-space:nowrap;left:592px;width:600px;text-align:center;">Configure Interaction...</div>
<div style="top:372.2px;height:12px;line-height:12px;font-size:8.25px;color:#d4d4d4;white-space:nowrap;left:776.7px;">LMB-Alt</div>
<div style="top:372.2px;height:12px;line-height:12px;font-size:8.25px;color:#d4d4d4;white-space:nowrap;transform:scaleX(0.895);transform-origin:0 50%;left:846.5px;">ORBIT</div>
<div style="top:385.7px;height:12px;line-height:12px;font-size:8.25px;color:#d4d4d4;white-space:nowrap;left:776.7px;">RMB-Alt</div>
<div style="top:385.7px;height:12px;line-height:12px;font-size:8.25px;color:#d4d4d4;white-space:nowrap;transform:scaleX(0.895);transform-origin:0 50%;left:846.5px;">ZOOM</div>
<div style="top:399.2px;height:12px;line-height:12px;font-size:8.25px;color:#d4d4d4;white-space:nowrap;left:776.7px;">MMB-Alt</div>
<div style="top:399.2px;height:12px;line-height:12px;font-size:8.25px;color:#d4d4d4;white-space:nowrap;transform:scaleX(0.895);transform-origin:0 50%;left:846.5px;">PAN</div>
<div style="top:412.7px;height:12px;line-height:12px;font-size:8.25px;color:#d4d4d4;white-space:nowrap;left:776.7px;">LMB</div>
<div style="top:412.7px;height:12px;line-height:12px;font-size:8.25px;color:#d4d4d4;white-space:nowrap;transform:scaleX(0.895);transform-origin:0 50%;left:846.5px;">SELECT</div>
<div style="top:426.2px;height:12px;line-height:12px;font-size:8.25px;color:#d4d4d4;white-space:nowrap;left:776.7px;">LMB-Ctrl</div>
<div style="top:426.2px;height:12px;line-height:12px;font-size:8.25px;color:#d4d4d4;white-space:nowrap;transform:scaleX(0.895);transform-origin:0 50%;left:846.5px;">ADD_SELECT</div>
<div style="top:439.7px;height:12px;line-height:12px;font-size:8.25px;color:#d4d4d4;white-space:nowrap;left:776.7px;">LMB-Shift-Ctrl</div>
<div style="top:439.7px;height:12px;line-height:12px;font-size:8.25px;color:#d4d4d4;white-space:nowrap;transform:scaleX(0.895);transform-origin:0 50%;left:846.5px;">DESELECT</div>
<div style="top:453.2px;height:12px;line-height:12px;font-size:8.25px;color:#d4d4d4;white-space:nowrap;left:776.7px;">LMB-Shift</div>
<div style="top:453.2px;height:12px;line-height:12px;font-size:8.25px;color:#d4d4d4;white-space:nowrap;transform:scaleX(0.895);transform-origin:0 50%;left:846.5px;">ADD_SELECT_SHORT_PATH</div>
<div style="top:466.7px;height:12px;line-height:12px;font-size:8.25px;color:#d4d4d4;white-space:nowrap;left:776.7px;">DLMB</div>
<div style="top:466.7px;height:12px;line-height:12px;font-size:8.25px;color:#d4d4d4;white-space:nowrap;transform:scaleX(0.895);transform-origin:0 50%;left:846.5px;">SELECT_LOOP_PATH</div>
<div style="top:480.2px;height:12px;line-height:12px;font-size:8.25px;color:#d4d4d4;white-space:nowrap;left:776.7px;">DLMB-Ctrl</div>
<div style="top:480.2px;height:12px;line-height:12px;font-size:8.25px;color:#d4d4d4;white-space:nowrap;transform:scaleX(0.895);transform-origin:0 50%;left:846.5px;">ADD_SELECT_LOOP_PATH</div>
<div style="top:493.7px;height:12px;line-height:12px;font-size:8.25px;color:#d4d4d4;white-space:nowrap;left:776.7px;">DLMB-Shift-Ctrl</div>
<div style="top:493.7px;height:12px;line-height:12px;font-size:8.25px;color:#d4d4d4;white-space:nowrap;transform:scaleX(0.895);transform-origin:0 50%;left:846.5px;">DESELECT_PATH</div>
<div style="top:507.20000000000005px;height:12px;line-height:12px;font-size:8.25px;color:#d4d4d4;white-space:nowrap;left:776.7px;">MMB-Space</div>
<div style="top:507.20000000000005px;height:12px;line-height:12px;font-size:8.25px;color:#d4d4d4;white-space:nowrap;transform:scaleX(0.895);transform-origin:0 50%;left:846.5px;">SELECT_TRANSLATE</div>
<div style="top:520.7px;height:12px;line-height:12px;font-size:8.25px;color:#d4d4d4;white-space:nowrap;left:776.7px;">RMB-Space</div>
<div style="top:520.7px;height:12px;line-height:12px;font-size:8.25px;color:#d4d4d4;white-space:nowrap;transform:scaleX(0.895);transform-origin:0 50%;left:846.5px;">SELECT_ROTATE</div>
<div style="top:534.2px;height:12px;line-height:12px;font-size:8.25px;color:#d4d4d4;white-space:nowrap;left:776.7px;">LMB-Space</div>
<div style="top:534.2px;height:12px;line-height:12px;font-size:8.25px;color:#d4d4d4;white-space:nowrap;transform:scaleX(0.895);transform-origin:0 50%;left:846.5px;">SELECT_SCALE</div>
<div style="top:547.7px;height:12px;line-height:12px;font-size:8.25px;color:#d4d4d4;white-space:nowrap;left:776.7px;">MMB-Ctrl-Space</div>
<div style="top:547.7px;height:12px;line-height:12px;font-size:8.25px;color:#d4d4d4;white-space:nowrap;transform:scaleX(0.895);transform-origin:0 50%;left:846.5px;">ADD_SELECT_TRANSLATE</div>
<div style="top:561.2px;height:12px;line-height:12px;font-size:8.25px;color:#d4d4d4;white-space:nowrap;left:776.7px;">RMB-Ctrl-Space</div>
<div style="top:561.2px;height:12px;line-height:12px;font-size:8.25px;color:#d4d4d4;white-space:nowrap;transform:scaleX(0.895);transform-origin:0 50%;left:846.5px;">ADD_SELECT_ROTATE</div>
<div style="top:574.7px;height:12px;line-height:12px;font-size:8.25px;color:#d4d4d4;white-space:nowrap;left:776.7px;">LMB-Ctrl-Space</div>
<div style="top:574.7px;height:12px;line-height:12px;font-size:8.25px;color:#d4d4d4;white-space:nowrap;transform:scaleX(0.895);transform-origin:0 50%;left:846.5px;">ADD_SELECT_SCALE</div>
<div style="top:588.2px;height:12px;line-height:12px;font-size:8.25px;color:#d4d4d4;white-space:nowrap;left:776.7px;">MMB-D</div>
<div style="top:588.2px;height:12px;line-height:12px;font-size:8.25px;color:#d4d4d4;white-space:nowrap;transform:scaleX(0.895);transform-origin:0 50%;left:846.5px;">TRANSLATE_ISLAND</div>
<div style="top:601.7px;height:12px;line-height:12px;font-size:8.25px;color:#d4d4d4;white-space:nowrap;left:776.7px;">RMB-D</div>
<div style="top:601.7px;height:12px;line-height:12px;font-size:8.25px;color:#d4d4d4;white-space:nowrap;transform:scaleX(0.895);transform-origin:0 50%;left:846.5px;">ROTATE_ISLAND</div>
<div style="left:414.5px;top:541.5px;width:352px;height:57px;background:#3c3c3c;"></div>
<div style="left:414.5px;top:541.5px;width:341px;height:16px;background:#1b1b1b;"></div>
<div style="top:543.3px;height:14px;line-height:14px;font-size:9px;color:#e2e2e2;white-space:nowrap;font-weight:700;transform:scaleX(1.08);transform-origin:0 50%;left:417.7px;">Transform</div>
<div style="left:755.5px;top:541.5px;width:11px;height:16px;background:#383838;"></div>
<div style="top:543.8px;height:12px;line-height:12px;font-size:8.6px;color:#c8c8c8;white-space:nowrap;left:461px;width:600px;text-align:center;">?</div>
<div style="left:417.5px;top:561px;width:29.0px;height:16.5px;background:#424242;"></div>
<div style="top:563.55px;height:12px;line-height:12px;font-size:8px;color:#d4d4d4;white-space:nowrap;left:132.0px;width:600px;text-align:center;">Local</div>
<div style="left:451px;top:561px;width:32px;height:16.5px;background:#222;"></div>
<div style="top:563.55px;height:12px;line-height:12px;font-size:8px;color:#f0600a;white-space:nowrap;left:167.0px;width:600px;text-align:center;">Center</div>
<div style="left:484px;top:561px;width:32.5px;height:16.5px;background:#424242;"></div>
<div style="top:563.55px;height:12px;line-height:12px;font-size:8px;color:#d4d4d4;white-space:nowrap;left:200.25px;width:600px;text-align:center;">Mouse</div>
<div style="left:417.5px;top:579px;width:29.0px;height:16px;background:#222;"></div>
<div style="top:581.3px;height:12px;line-height:12px;font-size:8px;color:#f0600a;white-space:nowrap;left:132.0px;width:600px;text-align:center;">World</div>
<div style="left:451px;top:579px;width:32px;height:16px;background:#424242;"></div>
<div style="top:581.3px;height:12px;line-height:12px;font-size:8px;color:#d4d4d4;white-space:nowrap;left:167.0px;width:600px;text-align:center;">Multi</div>
<div style="left:484px;top:579px;width:32.5px;height:16px;background:#424242;"></div>
<div style="top:581.3px;height:12px;line-height:12px;font-size:8px;color:#d4d4d4;white-space:nowrap;left:200.25px;width:600px;text-align:center;">User</div>
<div style="left:520.5px;top:561px;width:16.5px;height:16.5px;background:#222;"></div>
<div style="top:563.55px;height:12px;line-height:12px;font-size:8px;color:#f0600a;white-space:nowrap;left:228.75px;width:600px;text-align:center;">Tu</div>
<div style="left:537px;top:561px;width:72px;height:16.5px;background:#424242;"></div>
<div style="top:563.75px;height:12px;line-height:12px;font-size:8px;color:#d4d4d4;white-space:nowrap;left:540px;">0</div>
<svg style="left:0;top:0" width="1024" height="675"><path d="M597.0,568.05 L600.5,562.55 L604.0,568.05 Z M597.0,570.45 L600.5,575.95 L604.0,570.45 Z" fill="#b4b4b4"/></svg>
<div style="left:611px;top:561px;width:16px;height:16.5px;background:#222;"></div>
<div style="top:563.55px;height:12px;line-height:12px;font-size:8px;color:#f0600a;white-space:nowrap;left:319.0px;width:600px;text-align:center;">Su</div>
<div style="left:627px;top:561px;width:73px;height:16.5px;background:#424242;"></div>
<div style="top:563.75px;height:12px;line-height:12px;font-size:8px;color:#d4d4d4;white-space:nowrap;left:630px;">0</div>
<svg style="left:0;top:0" width="1024" height="675"><path d="M687.5,568.05 L691,562.55 L694.5,568.05 Z M687.5,570.45 L691,575.95 L694.5,570.45 Z" fill="#b4b4b4"/></svg>
<div style="left:520.5px;top:579px;width:16.5px;height:16px;background:#222;"></div>
<div style="top:581.3px;height:12px;line-height:12px;font-size:8px;color:#f0600a;white-space:nowrap;left:228.75px;width:600px;text-align:center;">Tv</div>
<div style="left:537px;top:579px;width:72px;height:16px;background:#424242;"></div>
<div style="top:581.5px;height:12px;line-height:12px;font-size:8px;color:#d4d4d4;white-space:nowrap;left:540px;">0</div>
<svg style="left:0;top:0" width="1024" height="675"><path d="M597.0,585.8 L600.5,580.3 L604.0,585.8 Z M597.0,588.2 L600.5,593.7 L604.0,588.2 Z" fill="#b4b4b4"/></svg>
<div style="left:611px;top:579px;width:16px;height:16px;background:#222;"></div>
<div style="top:581.3px;height:12px;line-height:12px;font-size:8px;color:#f0600a;white-space:nowrap;left:319.0px;width:600px;text-align:center;">Sv</div>
<div style="left:627px;top:579px;width:73px;height:16px;background:#424242;"></div>
<div style="top:581.5px;height:12px;line-height:12px;font-size:8px;color:#d4d4d4;white-space:nowrap;left:630px;">0</div>
<svg style="left:0;top:0" width="1024" height="675"><path d="M687.5,585.8 L691,580.3 L694.5,585.8 Z M687.5,588.2 L691,593.7 L694.5,588.2 Z" fill="#b4b4b4"/></svg>
<div style="left:701px;top:561px;width:13px;height:16.5px;background:#404040;"></div>
<div style="top:563.55px;height:12px;line-height:12px;font-size:8px;color:#d4d4d4;white-space:nowrap;left:407.5px;width:600px;text-align:center;">Rw</div>
<div style="left:701px;top:579px;width:13px;height:16px;background:#404040;"></div>
<div style="top:581.3px;height:12px;line-height:12px;font-size:8px;color:#d4d4d4;white-space:nowrap;left:407.5px;width:600px;text-align:center;">In</div>
<div style="left:719px;top:561px;width:44.5px;height:34px;background:#404040;"></div>
<div style="top:563.5px;height:12px;line-height:12px;font-size:8px;color:#d4d4d4;white-space:nowrap;left:430px;width:600px;text-align:center;">+90</div>
<div style="top:563.5px;height:12px;line-height:12px;font-size:8px;color:#d4d4d4;white-space:nowrap;left:452px;width:600px;text-align:center;">-90</div>
<div style="top:581.0px;height:12px;line-height:12px;font-size:8px;color:#d4d4d4;white-space:nowrap;left:441px;width:600px;text-align:center;">180</div>
<div style="left:414.5px;top:599.8px;width:17px;height:15.2px;background:#1b1b1b;overflow:hidden;"><div style="left:5.6px;top:2.4px;font-size:9.5px;color:#d8d8d8;font-weight:700;white-space:nowrap;line-height:12px;height:12px;transform-origin:0 0;transform:rotate(90deg) translate(0,-6px);">Gri</div></div>
<div style="left:436.5px;top:599.8px;width:17px;height:15.2px;background:#1b1b1b;overflow:hidden;"><div style="left:5.6px;top:2.4px;font-size:9.5px;color:#d8d8d8;font-weight:700;white-space:nowrap;line-height:12px;height:12px;transform-origin:0 0;transform:rotate(90deg) translate(0,-6px);">UV</div></div>
<div style="left:458.5px;top:599.8px;width:17px;height:15.2px;background:#1b1b1b;overflow:hidden;"><div style="left:5.6px;top:2.4px;font-size:9.5px;color:#d8d8d8;font-weight:700;white-space:nowrap;line-height:12px;height:12px;transform-origin:0 0;transform:rotate(90deg) translate(0,-6px);">Mu</div></div>
<div style="left:0px;top:615px;width:1024px;height:4px;background:#161616;"></div>
<div style="left:0px;top:618.8px;width:1024px;height:35.5px;background:#3b3b3b;"></div>
<div style="left:0px;top:654.3px;width:1024px;height:3.2px;background:#1c1c1c;"></div>
<div style="left:8.5px;top:631.5px;width:10.5px;height:10.5px;background:#f0600a;"></div>
<div style="left:25px;top:621px;width:163.5px;height:30.5px;background:#222;"></div>
<div style="top:621.3px;height:12px;line-height:12px;font-size:8px;color:#d4d4d4;white-space:nowrap;left:26.7px;">EDGES</div>
<div style="top:638.5px;height:12px;line-height:12px;font-size:8.35px;color:#d4d4d4;white-space:nowrap;left:26.7px;">Selected: 0 | Hidden: 0 | Total: 0</div>
<div style="left:197.5px;top:620px;width:18.5px;height:32px;background:#404040;"></div>
<div style="top:630.5px;height:12px;line-height:12px;font-size:8px;color:#d4d4d4;white-space:nowrap;left:-93.25px;width:600px;text-align:center;">Off</div>
<div style="left:217px;top:620px;width:31px;height:16px;background:#404040;"></div>
<div style="top:622.5px;height:12px;line-height:12px;font-size:8px;color:#d4d4d4;white-space:nowrap;left:-67.5px;width:600px;text-align:center;">Topo</div>
<div style="left:249px;top:620px;width:34px;height:16px;background:#282828;"></div>
<div style="top:622.5px;height:12px;line-height:12px;font-size:8px;color:#f0600a;white-space:nowrap;left:-34px;width:600px;text-align:center;">Stretch</div>
<div style="left:217px;top:636px;width:31px;height:16px;background:#404040;"></div>
<div style="top:638.5px;height:12px;line-height:12px;font-size:8px;color:#d4d4d4;white-space:nowrap;left:-67.5px;width:600px;text-align:center;">Mat ID</div>
<div style="left:249px;top:636px;width:34px;height:16px;background:#404040;"></div>
<div style="top:638.5px;height:12px;line-height:12px;font-size:8px;color:#d4d4d4;white-space:nowrap;left:-34px;width:600px;text-align:center;">Texel D</div>
<div style="left:302px;top:620px;width:580px;height:15px;background:linear-gradient(90deg,#d82206 0%,#cc3420 12%,#9a9e98 50%,#2c7ccc 90%,#1876d8 100%);"></div>
<div style="top:622.0px;height:12px;line-height:12px;font-size:8px;color:#c4c4c4;white-space:nowrap;left:292px;width:600px;text-align:center;">Stretch</div>
<div style="left:302.0px;top:635px;width:1px;height:2px;background:#9a9a9a;"></div>
<div style="top:636.0px;height:12px;line-height:12px;font-size:8px;color:#d4d4d4;white-space:nowrap;left:301px;">0</div>
<div style="left:365.94444444444446px;top:635px;width:1px;height:2px;background:#9a9a9a;"></div>
<div style="top:636.0px;height:12px;line-height:12px;font-size:8px;color:#d4d4d4;white-space:nowrap;left:66.44444444444446px;width:600px;text-align:center;">0.2222</div>
<div style="left:430.3888888888889px;top:635px;width:1px;height:2px;background:#9a9a9a;"></div>
<div style="top:636.0px;height:12px;line-height:12px;font-size:8px;color:#d4d4d4;white-space:nowrap;left:130.8888888888889px;width:600px;text-align:center;">0.4444</div>
<div style="left:494.83333333333337px;top:635px;width:1px;height:2px;background:#9a9a9a;"></div>
<div style="top:636.0px;height:12px;line-height:12px;font-size:8px;color:#d4d4d4;white-space:nowrap;left:195.33333333333337px;width:600px;text-align:center;">0.6667</div>
<div style="left:559.2777777777778px;top:635px;width:1px;height:2px;background:#9a9a9a;"></div>
<div style="top:636.0px;height:12px;line-height:12px;font-size:8px;color:#d4d4d4;white-space:nowrap;left:259.7777777777778px;width:600px;text-align:center;">0.8889</div>
<div style="left:623.7222222222222px;top:635px;width:1px;height:2px;background:#9a9a9a;"></div>
<div style="top:636.0px;height:12px;line-height:12px;font-size:8px;color:#d4d4d4;white-space:nowrap;left:324.2222222222222px;width:600px;text-align:center;">1.111</div>
<div style="left:688.1666666666667px;top:635px;width:1px;height:2px;background:#9a9a9a;"></div>
<div style="top:636.0px;height:12px;line-height:12px;font-size:8px;color:#d4d4d4;white-space:nowrap;left:388.66666666666674px;width:600px;text-align:center;">1.333</div>
<div style="left:752.6111111111111px;top:635px;width:1px;height:2px;background:#9a9a9a;"></div>
<div style="top:636.0px;height:12px;line-height:12px;font-size:8px;color:#d4d4d4;white-space:nowrap;left:453.1111111111111px;width:600px;text-align:center;">1.556</div>
<div style="left:817.0555555555555px;top:635px;width:1px;height:2px;background:#9a9a9a;"></div>
<div style="top:636.0px;height:12px;line-height:12px;font-size:8px;color:#d4d4d4;white-space:nowrap;left:517.5555555555555px;width:600px;text-align:center;">1.778</div>
<div style="left:881.0px;top:635px;width:1px;height:2px;background:#9a9a9a;"></div>
<div style="top:636.5px;height:12px;line-height:12px;font-size:8px;color:#d4d4d4;white-space:nowrap;left:685.3px;width:200px;text-align:right;">2</div>
<div style="top:621.2px;height:12px;line-height:12px;font-size:8.2px;color:#8c8c8c;white-space:nowrap;left:897px;">Support</div>
<div style="left:926.5px;top:628.5px;width:93.5px;height:1px;background:#4a4a4a;"></div>
<div style="left:894.8px;top:631.8px;width:21.2px;height:20.2px;background:#3d3d3d;"></div>
<div style="left:916.8px;top:631.8px;width:46.2px;height:20.2px;background:#3d3d3d;"></div>
<div style="left:964px;top:631.8px;width:55.2px;height:20.2px;background:#3d3d3d;"></div>
<div style="top:636.3px;height:12px;line-height:12px;font-size:8.1px;color:#d4d4d4;white-space:nowrap;left:605.3px;width:600px;text-align:center;">Bug</div>
<div style="top:636.3px;height:12px;line-height:12px;font-size:8.1px;color:#d4d4d4;white-space:nowrap;left:640px;width:600px;text-align:center;">F. Request</div>
<div style="top:636.3px;height:12px;line-height:12px;font-size:7.95px;color:#d4d4d4;white-space:nowrap;left:691.4px;width:600px;text-align:center;">New Release</div>
<svg style="left:0;top:0" width="1024" height="675" viewBox="0 0 1024 675"><path d="M7.8,68.3 H16.2" stroke="#f55f00" stroke-width="1.8"/><path d="M16.2,68.3 H25.2" stroke="#5fe0f0" stroke-width="1.8"/><path d="M14.5,67.3 L18.7,66.7 L24,53.5 L20.2,55.8 Z" fill="#b0b0b0"/><path d="M16,63.6 l4.2,-1.8 M17.9,59.8 l4.2,-1.9" stroke="#444" stroke-width="0.7"/><g transform="translate(40.8,61.2)"><ellipse rx="8" ry="3.4" transform="rotate(17)" fill="none" stroke="#58c8dc" stroke-width="1.1"/><path d="M-0.6,-8 L0.8,-5.4" stroke="#f55f00" stroke-width="1.1"/><path d="M-2.6,4 L0.6,7.6" stroke="#f55f00" stroke-width="1.1" stroke-dasharray="2.2 1.2"/><path d="M-5.6,6 L-1.6,1.6" stroke="#b8b8b8" stroke-width="0.9"/><path d="M-2,2 L4,-4.6" stroke="#b8b8b8" stroke-width="2.3" stroke-linecap="round"/><path d="M2.6,-3 L4,-4.6" stroke="#4a4a4a" stroke-width="0.8" stroke-linecap="round"/></g><g transform="translate(16.1,89.5)"><ellipse rx="8" ry="3.4" transform="rotate(17)" fill="none" stroke="#58c8dc" stroke-width="1.1" stroke-dasharray="1.7 1.5"/><path d="M-0.6,-8 L0.8,-5.4" stroke="#5fe0f0" stroke-width="1.1"/><path d="M-2.6,4 L0.6,7.6" stroke="#5fe0f0" stroke-width="1.1" stroke-dasharray="2.2 1.2"/><path d="M-5.6,6 L-1.6,1.6" stroke="#b8b8b8" stroke-width="0.9"/><path d="M-2,2 L4,-4.6" stroke="#b8b8b8" stroke-width="2.3" stroke-linecap="round"/><path d="M2.6,-3 L4,-4.6" stroke="#4a4a4a" stroke-width="0.8" stroke-linecap="round"/></g><g transform="translate(40.8,89.5)"><ellipse rx="8" ry="3.4" transform="rotate(17)" fill="none" stroke="#58c8dc" stroke-width="1.1" stroke-dasharray="1.7 1.5"/><path d="M-0.6,-8 L0.8,-5.4" stroke="#f55f00" stroke-width="1.1"/><path d="M-2.6,4 L0.6,7.6" stroke="#f55f00" stroke-width="1.1" stroke-dasharray="2.2 1.2"/><path d="M-5.6,6 L-1.6,1.6" stroke="#b8b8b8" stroke-width="0.9"/><path d="M-2,2 L4,-4.6" stroke="#b8b8b8" stroke-width="2.3" stroke-linecap="round"/><path d="M2.6,-3 L4,-4.6" stroke="#4a4a4a" stroke-width="0.8" stroke-linecap="round"/></g><path d="M173.9,58.8 L176,61.5 L178.6,58.8 V71.3 L178.2,75 L174,70.6 Z" fill="#f55f00"/><path d="M179,71.4 H186.3 V75.4 H179 Z" fill="#f55f00"/><path d="M186.9,61.5 L189.3,58.8 L191.4,61.5 V70.6 L186.9,75 Z" fill="#f55f00"/><path d="M209.7,64.5 L214,58.5 V75 L209.7,69 Z" fill="#f55f00"/><path d="M227.2,64.5 L222.9,58.5 V75 L227.2,69 Z" fill="#f55f00"/><path d="M214.6,58.1 H222.3 V62.4 H214.6 Z M214.6,71.1 H222.3 V75.5 H214.6 Z" fill="#f55f00"/><circle cx="414.3" cy="56.6" r="2.7" fill="#a4a4a4"/><path d="M414.3,57 V68.7" stroke="#a4a4a4" stroke-width="1"/><path d="M430.8,61.25 H445.3" stroke="#a4a4a4" stroke-width="1.5"/><circle cx="430.8" cy="61.25" r="1.4" fill="#a4a4a4"/><circle cx="445.3" cy="61.25" r="1.4" fill="#a4a4a4"/><path d="M453.6,75.3 H468 M460.6,67.8 V82.4" stroke="#a4a4a4" stroke-width="1.4"/><circle cx="453.6" cy="75.3" r="1.3" fill="#a4a4a4"/><circle cx="468" cy="75.3" r="1.3" fill="#a4a4a4"/><circle cx="460.6" cy="67.8" r="1.3" fill="#a4a4a4"/><circle cx="460.6" cy="82.4" r="1.3" fill="#a4a4a4"/><path d="M463.4,78.2 L468.6,83.39999999999999 M468.6,78.2 L463.4,83.39999999999999" stroke="#f55f00" stroke-width="1.7"/><circle cx="413.4" cy="85.2" r="2.7" fill="#a4a4a4"/><path d="M413.4,86 V97" stroke="#a4a4a4" stroke-width="1"/><path d="M417.0,92.4 L422.20000000000005,97.6 M422.20000000000005,92.4 L417.0,97.6" stroke="#f55f00" stroke-width="1.7"/><path d="M438,82 V96.6" stroke="#a4a4a4" stroke-width="1.5"/><circle cx="438" cy="82" r="1.4" fill="#a4a4a4"/><circle cx="438" cy="96.6" r="1.4" fill="#a4a4a4"/><rect x="487.9" y="52" width="3.4" height="3.4" fill="#f55f00"/><rect x="492.9" y="52" width="3.4" height="3.4" fill="#f55f00"/><rect x="487.9" y="57" width="3.4" height="3.4" fill="#f55f00"/><rect x="492.9" y="57" width="3.4" height="3.4" fill="#f55f00"/><rect x="487.9" y="62" width="8.4" height="8.4" fill="#f55f00"/><rect x="497.9" y="62" width="8.5" height="8.4" fill="#f55f00"/><rect x="497.9" y="55.3" width="5.2" height="5" fill="#f55f00"/><rect x="487.9" y="79.6" width="3.4" height="3.4" fill="#f55f00"/><rect x="492.9" y="79.6" width="3.4" height="3.4" fill="#f55f00"/><rect x="487.9" y="84.6" width="3.4" height="3.4" fill="#f55f00"/><rect x="492.9" y="84.6" width="3.4" height="3.4" fill="#f55f00"/><rect x="487.9" y="89.6" width="8.4" height="8.4" fill="#f55f00"/><rect x="497.9" y="89.6" width="8.5" height="8.4" fill="#f55f00"/><path d="M498.1,84.39999999999999 H504.9 M501.5,80.99999999999999 V87.8" stroke="#f55f00" stroke-width="1"/><path d="M506.3,84.39999999999999 l-2.2,-1.8 v3.6 Z" fill="#f55f00" transform="rotate(0 501.5 84.39999999999999)"/><path d="M506.3,84.39999999999999 l-2.2,-1.8 v3.6 Z" fill="#f55f00" transform="rotate(90 501.5 84.39999999999999)"/><path d="M506.3,84.39999999999999 l-2.2,-1.8 v3.6 Z" fill="#f55f00" transform="rotate(180 501.5 84.39999999999999)"/><path d="M506.3,84.39999999999999 l-2.2,-1.8 v3.6 Z" fill="#f55f00" transform="rotate(270 501.5 84.39999999999999)"/><rect x="517.4" y="52.4" width="19.4" height="17.6" fill="#424242" stroke="#c4c4c4" stroke-width="0.9"/><path d="M519.55,52.8 v16.8 M521.6999999999999,52.8 v16.8 M523.85,52.8 v16.8 M526.0,52.8 v16.8 M528.15,52.8 v16.8 M530.3,52.8 v16.8 M532.4499999999999,52.8 v16.8 M534.6,52.8 v16.8 M517.8,54.6 h18.6 M517.8,56.8 h18.6 M517.8,59.0 h18.6 M517.8,61.2 h18.6 M517.8,63.4 h18.6 M517.8,65.6 h18.6 M517.8,67.8 h18.6 " stroke="#767676" stroke-width="0.4"/><ellipse cx="523.7" cy="63.9" rx="5" ry="5" fill="none" stroke="#f55f00" stroke-width="1.3"/><ellipse cx="533" cy="66.4" rx="2.5" ry="2.5" fill="none" stroke="#f55f00" stroke-width="1.2"/><rect x="517.4" y="80.0" width="19.4" height="17.6" fill="#424242" stroke="#c4c4c4" stroke-width="0.9"/><path d="M519.55,80.39999999999999 v16.8 M521.6999999999999,80.39999999999999 v16.8 M523.85,80.39999999999999 v16.8 M526.0,80.39999999999999 v16.8 M528.15,80.39999999999999 v16.8 M530.3,80.39999999999999 v16.8 M532.4499999999999,80.39999999999999 v16.8 M534.6,80.39999999999999 v16.8 M517.8,82.2 h18.6 M517.8,84.4 h18.6 M517.8,86.6 h18.6 M517.8,88.8 h18.6 M517.8,91.0 h18.6 M517.8,93.2 h18.6 M517.8,95.4 h18.6 " stroke="#767676" stroke-width="0.4"/><ellipse cx="523.7" cy="88.5" rx="5" ry="7.8" fill="none" stroke="#f55f00" stroke-width="1.3"/><ellipse cx="533" cy="92.3" rx="2.3" ry="4.4" fill="none" stroke="#f55f00" stroke-width="1.2"/><rect x="548.9" y="62.1" width="8" height="7.6" fill="none" stroke="#f55f00" stroke-width="1.2"/><rect x="552.3" y="53.3" width="13.1" height="12.5" fill="#f55f00"/><rect x="559.5" y="55.6" width="3.6" height="3.6" fill="#5fe0f0" stroke="#333" stroke-width="0.6"/><path d="M559.5,55.3 V62.6" stroke="#333" stroke-width="1"/><rect x="548.9" y="89.9" width="8" height="7.6" fill="none" stroke="#f55f00" stroke-width="1.2"/><rect x="552.3" y="81.2" width="13.1" height="12.6" fill="#6fe6f6"/><path d="M559.7,83 V90.3" stroke="#333" stroke-width="1.1"/><rect x="559.7" y="83.4" width="3.3" height="3.3" fill="none" stroke="#333" stroke-width="0.9"/><rect x="63.25" y="142.9" width="10" height="7.2" fill="#a8a8a8"/><path d="M59.55,143.5 V138.5 H65.25 M71.25,138.5 H76.95 V143.5 M76.95,149.5 V154.5 H71.25 M65.25,154.5 H59.55 V149.5" stroke="#c0c0c0" stroke-width="1.2" fill="none"/><circle cx="92.4" cy="146.5" r="8.6" fill="#a6a6a6"/><g fill="none" stroke="#b0b0b0" stroke-width="0.8"><circle cx="115" cy="146.5" r="8.6" fill="none"/><ellipse cx="115" cy="146.5" rx="3.87" ry="8.6"/><path d="M115,137.9 V155.1"/><path d="M106.4,146.0 Q115,149.0 123.6,146.0 M108.12,141.7 Q115,144.3 121.88,141.7 M107.94800000000001,150.7 Q115,153.9 122.05199999999999,150.7"/></g><rect x="126.6" y="135.25" width="22.400000000000006" height="22.5" fill="#282828"/><g fill="none" stroke="#5a5a5a" stroke-width="0.9"><circle cx="137.7" cy="146.5" r="8.6" fill="#9a9a9a"/><ellipse cx="137.7" cy="146.5" rx="3.87" ry="8.6"/><path d="M137.7,137.9 V155.1"/><path d="M129.1,146.0 Q137.7,149.0 146.29999999999998,146.0 M130.82,141.7 Q137.7,144.3 144.57999999999998,141.7 M130.648,150.7 Q137.7,153.9 144.75199999999998,150.7"/></g><rect x="151.3" y="135.25" width="22.099999999999994" height="22.5" fill="#282828"/><circle cx="162.2" cy="146.5" r="8.6" fill="#a6a6a6"/><defs><clipPath id="ck1"><circle cx="184.75" cy="146.5" r="8.6"/></clipPath></defs><g clip-path="url(#ck1)"><rect x="176.15" y="137.9" width="17.2" height="17.2" fill="#d0d0d0"/><rect x="176.15" y="137.90" width="3.44" height="3.44" fill="#4c4c4c"/><rect x="176.15" y="144.78" width="3.44" height="3.44" fill="#4c4c4c"/><rect x="176.15" y="151.66" width="3.44" height="3.44" fill="#4c4c4c"/><rect x="179.59" y="141.34" width="3.44" height="3.44" fill="#4c4c4c"/><rect x="179.59" y="148.22" width="3.44" height="3.44" fill="#4c4c4c"/><rect x="183.03" y="137.90" width="3.44" height="3.44" fill="#4c4c4c"/><rect x="183.03" y="144.78" width="3.44" height="3.44" fill="#4c4c4c"/><rect x="183.03" y="151.66" width="3.44" height="3.44" fill="#4c4c4c"/><rect x="186.47" y="141.34" width="3.44" height="3.44" fill="#4c4c4c"/><rect x="186.47" y="148.22" width="3.44" height="3.44" fill="#4c4c4c"/><rect x="189.91" y="137.90" width="3.44" height="3.44" fill="#4c4c4c"/><rect x="189.91" y="144.78" width="3.44" height="3.44" fill="#4c4c4c"/><rect x="189.91" y="151.66" width="3.44" height="3.44" fill="#4c4c4c"/></g><defs><clipPath id="ck2"><circle cx="207.5" cy="146.5" r="8.6"/></clipPath></defs><g clip-path="url(#ck2)"><rect x="198.9" y="137.9" width="17.2" height="17.2" fill="#8a8a8a"/><rect x="198.90" y="137.90" width="3.44" height="3.44" fill="#787878"/><rect x="198.90" y="144.78" width="3.44" height="3.44" fill="#787878"/><rect x="198.90" y="151.66" width="3.44" height="3.44" fill="#787878"/><rect x="202.34" y="141.34" width="3.44" height="3.44" fill="#787878"/><rect x="202.34" y="148.22" width="3.44" height="3.44" fill="#787878"/><rect x="205.78" y="137.90" width="3.44" height="3.44" fill="#787878"/><rect x="205.78" y="144.78" width="3.44" height="3.44" fill="#787878"/><rect x="205.78" y="151.66" width="3.44" height="3.44" fill="#787878"/><rect x="209.22" y="141.34" width="3.44" height="3.44" fill="#787878"/><rect x="209.22" y="148.22" width="3.44" height="3.44" fill="#787878"/><rect x="212.66" y="137.90" width="3.44" height="3.44" fill="#787878"/><rect x="212.66" y="144.78" width="3.44" height="3.44" fill="#787878"/><rect x="212.66" y="151.66" width="3.44" height="3.44" fill="#787878"/></g><defs><clipPath id="m1"><circle cx="230" cy="146.5" r="8.6"/></clipPath></defs><g clip-path="url(#m1)"><rect x="221.4" y="137.9" width="17.2" height="17.2" fill="#6e6e6e"/><path d="M228,155.5 L233.6,145.0 L240,155.5 Z" fill="#8c8c8c"/><path d="M221,155.5 L226.6,143.5 L232.6,155.5 Z" fill="#b4b4b4"/><circle cx="232.2" cy="142.3" r="2" fill="#ffffff"/></g><defs><clipPath id="m2"><circle cx="253.3" cy="146.5" r="8.6"/></clipPath></defs><g clip-path="url(#m2)"><rect x="244.70000000000002" y="137.9" width="17.2" height="17.2" fill="#2e2e2e"/><path d="M254.3,137.5 H263.3 V156.5 H254.3 Z" fill="#505050"/><path d="M244.3,150.5 L250.3,140.0 L255.8,148.5 L258.8,144.0 L263.3,150.5 V156.5 H244.3 Z" fill="#727272"/><path d="M244.3,152.5 L251.3,147.5 L257.3,155.5 H244.3 Z" fill="#a0a0a0"/><circle cx="255.5" cy="142.5" r="1.9" fill="#a8a8a8"/></g><rect x="275.2" y="144.7" width="3.6" height="3.6" fill="#a0a0a0"/><g transform="rotate(0 277 146.5)"><path d="M286.4,146.5 H282" stroke="#f55f00" stroke-width="1.3"/><path d="M279.6,146.5 l3.4,-2.2 v4.4 Z" fill="#f55f00"/></g><g transform="rotate(90 277 146.5)"><path d="M286.4,146.5 H282" stroke="#f55f00" stroke-width="1.3"/><path d="M279.6,146.5 l3.4,-2.2 v4.4 Z" fill="#f55f00"/></g><g transform="rotate(180 277 146.5)"><path d="M286.4,146.5 H282" stroke="#f55f00" stroke-width="1.3"/><path d="M279.6,146.5 l3.4,-2.2 v4.4 Z" fill="#f55f00"/></g><g transform="rotate(270 277 146.5)"><path d="M286.4,146.5 H282" stroke="#f55f00" stroke-width="1.3"/><path d="M279.6,146.5 l3.4,-2.2 v4.4 Z" fill="#f55f00"/></g><g fill="none" stroke="#a8a8a8" stroke-width="0.7"><circle cx="300" cy="146.5" r="4.3"/><ellipse cx="300" cy="146.5" rx="1.9" ry="4.3"/><path d="M295.7,146.5 H304.3 M296.4,144.2 H303.6 M296.4,148.8 H303.6"/></g><g transform="rotate(0 300 146.5)"><path d="M305.2,146.5 h2" stroke="#f55f00" stroke-width="1.2"/><path d="M309.6,146.5 l-3.2,-2.2 v4.4 Z" fill="#f55f00"/></g><g transform="rotate(90 300 146.5)"><path d="M305.2,146.5 h2" stroke="#f55f00" stroke-width="1.2"/><path d="M309.6,146.5 l-3.2,-2.2 v4.4 Z" fill="#f55f00"/></g><g transform="rotate(180 300 146.5)"><path d="M305.2,146.5 h2" stroke="#f55f00" stroke-width="1.2"/><path d="M309.6,146.5 l-3.2,-2.2 v4.4 Z" fill="#f55f00"/></g><g transform="rotate(270 300 146.5)"><path d="M305.2,146.5 h2" stroke="#f55f00" stroke-width="1.2"/><path d="M309.6,146.5 l-3.2,-2.2 v4.4 Z" fill="#f55f00"/></g><rect x="313.1" y="135.25" width="22.19999999999999" height="22.5" fill="#282828"/><rect x="322.09999999999997" y="145.5" width="4.6" height="8.6" rx="1.8" fill="#9c9c9c"/><circle cx="324.7" cy="143.5" r="4.6" fill="#b8b8b8"/><circle cx="324.0" cy="143.1" r="4" fill="#ffffff"/><circle cx="347.1" cy="146.5" r="8.6" fill="#8e8e8e"/><ellipse cx="347.1" cy="146.5" rx="8.4" ry="3" fill="none" stroke="#c8c8c8" stroke-width="0.9"/><rect x="358.5" y="135.25" width="22.30000000000001" height="22.5" fill="#282828"/><circle cx="369.7" cy="146.5" r="8.6" fill="#a4a4a4" stroke="#f55f00" stroke-width="1"/><rect x="382.8" y="135.25" width="11.6" height="22.5" fill="#444"/><rect x="395" y="135.25" width="10" height="22.5" fill="#282828"/><rect x="423" y="142.9" width="10" height="7.2" fill="#a8a8a8"/><path d="M419.3,143.5 V138.5 H425 M431,138.5 H436.7 V143.5 M436.7,149.5 V154.5 H431 M425,154.5 H419.3 V149.5" stroke="#c0c0c0" stroke-width="1.2" fill="none"/><circle cx="452" cy="146.5" r="8.6" fill="#a6a6a6"/><g fill="none" stroke="#b0b0b0" stroke-width="0.8"><circle cx="474.75" cy="146.5" r="8.6" fill="none"/><ellipse cx="474.75" cy="146.5" rx="3.87" ry="8.6"/><path d="M474.75,137.9 V155.1"/><path d="M466.15,146.0 Q474.75,149.0 483.35,146.0 M467.87,141.7 Q474.75,144.3 481.63,141.7 M467.698,150.7 Q474.75,153.9 481.802,150.7"/></g><rect x="486" y="135.25" width="22.30000000000001" height="22.5" fill="#282828"/><g fill="none" stroke="#5a5a5a" stroke-width="0.9"><circle cx="497" cy="146.5" r="8.6" fill="#9a9a9a"/><ellipse cx="497" cy="146.5" rx="3.87" ry="8.6"/><path d="M497,137.9 V155.1"/><path d="M488.4,146.0 Q497,149.0 505.6,146.0 M490.12,141.7 Q497,144.3 503.88,141.7 M489.948,150.7 Q497,153.9 504.052,150.7"/></g><rect x="510.7" y="135.25" width="22.30000000000001" height="22.5" fill="#282828"/><circle cx="522" cy="146.5" r="8.6" fill="#a6a6a6"/><defs><clipPath id="ck3"><circle cx="544.5" cy="146.5" r="8.6"/></clipPath></defs><g clip-path="url(#ck3)"><rect x="535.9" y="137.9" width="17.2" height="17.2" fill="#d0d0d0"/><rect x="535.90" y="137.90" width="3.44" height="3.44" fill="#4c4c4c"/><rect x="535.90" y="144.78" width="3.44" height="3.44" fill="#4c4c4c"/><rect x="535.90" y="151.66" width="3.44" height="3.44" fill="#4c4c4c"/><rect x="539.34" y="141.34" width="3.44" height="3.44" fill="#4c4c4c"/><rect x="539.34" y="148.22" width="3.44" height="3.44" fill="#4c4c4c"/><rect x="542.78" y="137.90" width="3.44" height="3.44" fill="#4c4c4c"/><rect x="542.78" y="144.78" width="3.44" height="3.44" fill="#4c4c4c"/><rect x="542.78" y="151.66" width="3.44" height="3.44" fill="#4c4c4c"/><rect x="546.22" y="141.34" width="3.44" height="3.44" fill="#4c4c4c"/><rect x="546.22" y="148.22" width="3.44" height="3.44" fill="#4c4c4c"/><rect x="549.66" y="137.90" width="3.44" height="3.44" fill="#4c4c4c"/><rect x="549.66" y="144.78" width="3.44" height="3.44" fill="#4c4c4c"/><rect x="549.66" y="151.66" width="3.44" height="3.44" fill="#4c4c4c"/></g><defs><clipPath id="ck4"><circle cx="567" cy="146.5" r="8.6"/></clipPath></defs><g clip-path="url(#ck4)"><rect x="558.4" y="137.9" width="17.2" height="17.2" fill="#8a8a8a"/><rect x="558.40" y="137.90" width="3.44" height="3.44" fill="#787878"/><rect x="558.40" y="144.78" width="3.44" height="3.44" fill="#787878"/><rect x="558.40" y="151.66" width="3.44" height="3.44" fill="#787878"/><rect x="561.84" y="141.34" width="3.44" height="3.44" fill="#787878"/><rect x="561.84" y="148.22" width="3.44" height="3.44" fill="#787878"/><rect x="565.28" y="137.90" width="3.44" height="3.44" fill="#787878"/><rect x="565.28" y="144.78" width="3.44" height="3.44" fill="#787878"/><rect x="565.28" y="151.66" width="3.44" height="3.44" fill="#787878"/><rect x="568.72" y="141.34" width="3.44" height="3.44" fill="#787878"/><rect x="568.72" y="148.22" width="3.44" height="3.44" fill="#787878"/><rect x="572.16" y="137.90" width="3.44" height="3.44" fill="#787878"/><rect x="572.16" y="144.78" width="3.44" height="3.44" fill="#787878"/><rect x="572.16" y="151.66" width="3.44" height="3.44" fill="#787878"/></g><defs><clipPath id="m3"><circle cx="589.75" cy="146.5" r="8.6"/></clipPath></defs><g clip-path="url(#m3)"><rect x="581.15" y="137.9" width="17.2" height="17.2" fill="#6e6e6e"/><path d="M587.75,155.5 L593.35,145.0 L599.75,155.5 Z" fill="#8c8c8c"/><path d="M580.75,155.5 L586.35,143.5 L592.35,155.5 Z" fill="#b4b4b4"/><circle cx="591.95" cy="142.3" r="2" fill="#ffffff"/></g><defs><clipPath id="m4"><circle cx="613" cy="146.5" r="8.6"/></clipPath></defs><g clip-path="url(#m4)"><rect x="604.4" y="137.9" width="17.2" height="17.2" fill="#2e2e2e"/><path d="M614,137.5 H623 V156.5 H614 Z" fill="#505050"/><path d="M604,150.5 L610,140.0 L615.5,148.5 L618.5,144.0 L623,150.5 V156.5 H604 Z" fill="#727272"/><path d="M604,152.5 L611,147.5 L617,155.5 H604 Z" fill="#a0a0a0"/><circle cx="615.2" cy="142.5" r="1.9" fill="#a8a8a8"/></g><rect x="635.2" y="144.7" width="3.6" height="3.6" fill="#a0a0a0"/><g transform="rotate(0 637 146.5)"><path d="M646.4,146.5 H642" stroke="#f55f00" stroke-width="1.3"/><path d="M639.6,146.5 l3.4,-2.2 v4.4 Z" fill="#f55f00"/></g><g transform="rotate(90 637 146.5)"><path d="M646.4,146.5 H642" stroke="#f55f00" stroke-width="1.3"/><path d="M639.6,146.5 l3.4,-2.2 v4.4 Z" fill="#f55f00"/></g><g transform="rotate(180 637 146.5)"><path d="M646.4,146.5 H642" stroke="#f55f00" stroke-width="1.3"/><path d="M639.6,146.5 l3.4,-2.2 v4.4 Z" fill="#f55f00"/></g><g transform="rotate(270 637 146.5)"><path d="M646.4,146.5 H642" stroke="#f55f00" stroke-width="1.3"/><path d="M639.6,146.5 l3.4,-2.2 v4.4 Z" fill="#f55f00"/></g><g fill="none" stroke="#a8a8a8" stroke-width="0.7"><circle cx="660" cy="146.5" r="4.3"/><ellipse cx="660" cy="146.5" rx="1.9" ry="4.3"/><path d="M655.7,146.5 H664.3 M656.4,144.2 H663.6 M656.4,148.8 H663.6"/></g><g transform="rotate(0 660 146.5)"><path d="M665.2,146.5 h2" stroke="#f55f00" stroke-width="1.2"/><path d="M669.6,146.5 l-3.2,-2.2 v4.4 Z" fill="#f55f00"/></g><g transform="rotate(90 660 146.5)"><path d="M665.2,146.5 h2" stroke="#f55f00" stroke-width="1.2"/><path d="M669.6,146.5 l-3.2,-2.2 v4.4 Z" fill="#f55f00"/></g><g transform="rotate(180 660 146.5)"><path d="M665.2,146.5 h2" stroke="#f55f00" stroke-width="1.2"/><path d="M669.6,146.5 l-3.2,-2.2 v4.4 Z" fill="#f55f00"/></g><g transform="rotate(270 660 146.5)"><path d="M665.2,146.5 h2" stroke="#f55f00" stroke-width="1.2"/><path d="M669.6,146.5 l-3.2,-2.2 v4.4 Z" fill="#f55f00"/></g><rect x="682.1" y="145.5" width="4.6" height="8.6" rx="1.8" fill="#9c9c9c"/><circle cx="684.6999999999999" cy="143.5" r="4.6" fill="#b8b8b8"/><circle cx="684.0" cy="143.1" r="4" fill="#ffffff"/><path d="M700.5,145.5 A7.4,7.4 0 0 0 706.5,153.7" fill="none" stroke="#5fe0f0" stroke-width="1.3"/><path d="M708.6,153.9 l-3.4,-2.4 v4.4 Z" fill="#5fe0f0"/><path d="M713.5,147.0 A7.4,7.4 0 0 0 707.5,139.1" fill="none" stroke="#5fe0f0" stroke-width="1.3"/><path d="M705.4,139.1 l3.4,-2.2 v4.4 Z" fill="#5fe0f0"/><rect x="703.2" y="146.1" width="7.6" height="4.6" fill="#f55f00"/><path d="M705,146.1 v-1.6 a2,2 0 0 1 4,0 v1.6" fill="none" stroke="#c8c8c8" stroke-width="0.9"/><rect x="722.9" y="139.9" width="13.4" height="13.2" fill="#8c8c8c"/><rect x="723.50" y="140.40" width="2.3" height="2.3" fill="#e4e4e4"/><rect x="723.50" y="143.70" width="2.3" height="2.3" fill="#e4e4e4"/><rect x="723.50" y="147.00" width="2.3" height="2.3" fill="#e4e4e4"/><rect x="723.50" y="150.30" width="2.3" height="2.3" fill="#e4e4e4"/><rect x="726.85" y="140.40" width="2.3" height="2.3" fill="#e4e4e4"/><rect x="726.85" y="143.70" width="2.3" height="2.3" fill="#e4e4e4"/><rect x="726.85" y="147.00" width="2.3" height="2.3" fill="#e4e4e4"/><rect x="726.85" y="150.30" width="2.3" height="2.3" fill="#e4e4e4"/><rect x="730.20" y="140.40" width="2.3" height="2.3" fill="#e4e4e4"/><rect x="730.20" y="143.70" width="2.3" height="2.3" fill="#e4e4e4"/><rect x="730.20" y="147.00" width="2.3" height="2.3" fill="#e4e4e4"/><rect x="730.20" y="150.30" width="2.3" height="2.3" fill="#e4e4e4"/><rect x="733.55" y="140.40" width="2.3" height="2.3" fill="#e4e4e4"/><rect x="733.55" y="143.70" width="2.3" height="2.3" fill="#e4e4e4"/><rect x="733.55" y="147.00" width="2.3" height="2.3" fill="#e4e4e4"/><rect x="733.55" y="150.30" width="2.3" height="2.3" fill="#e4e4e4"/><rect x="741.25" y="135.25" width="22.5" height="22.5" fill="#282828"/><circle cx="752.5" cy="146.5" r="8.6" fill="#a4a4a4" stroke="#f55f00" stroke-width="1"/><path d="M768,144.2 a2.6,2.6 0 1 0 0,5" fill="none" stroke="#f55f00" stroke-width="0.9"/><path d="M10,139.6 L19.4,146.7 L15.7,147.7 L18.1,153.2 L15.8,154.3 L13.3,149.1 L10,152.2 Z" fill="#f55f00"/><path d="M30,141.4 L35.4,146.8 L30,152.20000000000002 Z" fill="#8e8e8e"/><path d="M37.8,138.60000000000002 V155.0" stroke="#a8a8a8" stroke-width="1.3"/><path d="M45.6,141.8 L40.2,146.8 L45.6,151.8 Z" fill="none" stroke="#8e8e8e" stroke-width="0.8"/><path d="M30,164.0 L35.4,169.4 L30,174.8 Z" fill="#8e8e8e"/><path d="M37.8,161.20000000000002 V177.6" stroke="#a8a8a8" stroke-width="1.3"/><path d="M45.6,164.4 L40.2,169.4 L45.6,174.4 Z" fill="none" stroke="#8e8e8e" stroke-width="0.8"/><path d="M38.6,173.4 h6.8 M42,170.0 v6.8" stroke="#e4e4e4" stroke-width="1.9"/><rect x="6.8" y="163.1" width="13.1" height="12" fill="none" stroke="#9a9a9a" stroke-width="0.7"/><rect x="5.5" y="161.79999999999998" width="2.6" height="2.6" fill="#3d3d3d" stroke="#a4a4a4" stroke-width="0.6"/><rect x="18.599999999999998" y="161.79999999999998" width="2.6" height="2.6" fill="#3d3d3d" stroke="#a4a4a4" stroke-width="0.6"/><rect x="5.5" y="173.79999999999998" width="2.6" height="2.6" fill="#3d3d3d" stroke="#a4a4a4" stroke-width="0.6"/><rect x="18.599999999999998" y="173.79999999999998" width="2.6" height="2.6" fill="#3d3d3d" stroke="#a4a4a4" stroke-width="0.6"/><circle cx="13.35" cy="163.1" r="0.9" fill="#a4a4a4"/><circle cx="13.35" cy="175.1" r="0.9" fill="#a4a4a4"/><circle cx="6.8" cy="169.1" r="0.9" fill="#a4a4a4"/><circle cx="19.9" cy="169.1" r="0.9" fill="#a4a4a4"/><path d="M4.50,185.80 L4.50,186.87 L4.50,187.93 L4.50,189.00 L4.50,190.07 L4.50,191.13 L4.50,192.20 L4.50,193.27 L4.50,194.33 L4.50,195.40 L4.50,196.47 L4.50,197.53 L4.50,198.60 M4.50,185.80 L6.00,185.26 L7.50,184.81 L9.00,184.51 L10.50,184.40 L12.00,184.51 L13.50,184.81 L15.00,185.26 L16.50,185.80 L18.00,186.34 L19.50,186.79 L21.00,187.09 L22.50,187.20 M6.75,185.02 L6.75,186.09 L6.75,187.16 L6.75,188.22 L6.75,189.29 L6.75,190.36 L6.75,191.42 L6.75,192.49 L6.75,193.56 L6.75,194.62 L6.75,195.69 L6.75,196.76 L6.75,197.82 M4.50,187.40 L6.00,186.86 L7.50,186.41 L9.00,186.11 L10.50,186.00 L12.00,186.11 L13.50,186.41 L15.00,186.86 L16.50,187.40 L18.00,187.94 L19.50,188.39 L21.00,188.69 L22.50,188.80 M9.00,184.51 L9.00,185.57 L9.00,186.64 L9.00,187.71 L9.00,188.77 L9.00,189.84 L9.00,190.91 L9.00,191.97 L9.00,193.04 L9.00,194.11 L9.00,195.17 L9.00,196.24 L9.00,197.31 M4.50,189.00 L6.00,188.46 L7.50,188.01 L9.00,187.71 L10.50,187.60 L12.00,187.71 L13.50,188.01 L15.00,188.46 L16.50,189.00 L18.00,189.54 L19.50,189.99 L21.00,190.29 L22.50,190.40 M11.25,184.43 L11.25,185.49 L11.25,186.56 L11.25,187.63 L11.25,188.69 L11.25,189.76 L11.25,190.83 L11.25,191.89 L11.25,192.96 L11.25,194.03 L11.25,195.09 L11.25,196.16 L11.25,197.23 M4.50,190.60 L6.00,190.06 L7.50,189.61 L9.00,189.31 L10.50,189.20 L12.00,189.31 L13.50,189.61 L15.00,190.06 L16.50,190.60 L18.00,191.14 L19.50,191.59 L21.00,191.89 L22.50,192.00 M13.50,184.81 L13.50,185.88 L13.50,186.94 L13.50,188.01 L13.50,189.08 L13.50,190.14 L13.50,191.21 L13.50,192.28 L13.50,193.34 L13.50,194.41 L13.50,195.48 L13.50,196.54 L13.50,197.61 M4.50,192.20 L6.00,191.66 L7.50,191.21 L9.00,190.91 L10.50,190.80 L12.00,190.91 L13.50,191.21 L15.00,191.66 L16.50,192.20 L18.00,192.74 L19.50,193.19 L21.00,193.49 L22.50,193.60 M15.75,185.53 L15.75,186.59 L15.75,187.66 L15.75,188.73 L15.75,189.79 L15.75,190.86 L15.75,191.93 L15.75,192.99 L15.75,194.06 L15.75,195.13 L15.75,196.19 L15.75,197.26 L15.75,198.33 M4.50,193.80 L6.00,193.26 L7.50,192.81 L9.00,192.51 L10.50,192.40 L12.00,192.51 L13.50,192.81 L15.00,193.26 L16.50,193.80 L18.00,194.34 L19.50,194.79 L21.00,195.09 L22.50,195.20 M18.00,186.34 L18.00,187.40 L18.00,188.47 L18.00,189.54 L18.00,190.60 L18.00,191.67 L18.00,192.74 L18.00,193.80 L18.00,194.87 L18.00,195.94 L18.00,197.00 L18.00,198.07 L18.00,199.14 M4.50,195.40 L6.00,194.86 L7.50,194.41 L9.00,194.11 L10.50,194.00 L12.00,194.11 L13.50,194.41 L15.00,194.86 L16.50,195.40 L18.00,195.94 L19.50,196.39 L21.00,196.69 L22.50,196.80 M20.25,186.96 L20.25,188.03 L20.25,189.10 L20.25,190.16 L20.25,191.23 L20.25,192.30 L20.25,193.36 L20.25,194.43 L20.25,195.50 L20.25,196.56 L20.25,197.63 L20.25,198.70 L20.25,199.76 M4.50,197.00 L6.00,196.46 L7.50,196.01 L9.00,195.71 L10.50,195.60 L12.00,195.71 L13.50,196.01 L15.00,196.46 L16.50,197.00 L18.00,197.54 L19.50,197.99 L21.00,198.29 L22.50,198.40 M22.50,187.20 L22.50,188.27 L22.50,189.33 L22.50,190.40 L22.50,191.47 L22.50,192.53 L22.50,193.60 L22.50,194.67 L22.50,195.73 L22.50,196.80 L22.50,197.87 L22.50,198.93 L22.50,200.00 M4.50,198.60 L6.00,198.06 L7.50,197.61 L9.00,197.31 L10.50,197.20 L12.00,197.31 L13.50,197.61 L15.00,198.06 L16.50,198.60 L18.00,199.14 L19.50,199.59 L21.00,199.89 L22.50,200.00 " fill="none" stroke="#989898" stroke-width="0.55"/><path d="M6.60,207.86 L6.00,208.98 L5.55,210.10 L5.21,211.23 L4.98,212.35 L4.84,213.48 L4.80,214.60 L4.84,215.72 L4.98,216.85 L5.21,217.97 L5.55,219.10 L6.00,220.22 L6.60,221.34 M6.60,207.86 L7.75,207.27 L8.90,206.83 L10.05,206.50 L11.20,206.28 L12.35,206.14 L13.50,206.10 L14.65,206.14 L15.80,206.28 L16.95,206.50 L18.10,206.83 L19.25,207.27 L20.40,207.86 M8.32,207.04 L7.88,208.30 L7.54,209.56 L7.28,210.82 L7.11,212.08 L7.01,213.34 L6.98,214.60 L7.01,215.86 L7.11,217.12 L7.28,218.38 L7.54,219.64 L7.88,220.90 L8.32,222.16 M5.76,209.54 L7.05,209.11 L8.34,208.77 L9.63,208.53 L10.92,208.36 L12.21,208.26 L13.50,208.22 L14.79,208.26 L16.08,208.36 L17.37,208.53 L18.66,208.77 L19.95,209.11 L21.24,209.54 M10.05,206.50 L9.75,207.85 L9.52,209.20 L9.36,210.55 L9.24,211.90 L9.17,213.25 L9.15,214.60 L9.17,215.95 L9.24,217.30 L9.36,218.65 L9.52,220.00 L9.75,221.35 L10.05,222.70 M5.21,211.23 L6.59,210.94 L7.98,210.72 L9.36,210.55 L10.74,210.44 L12.12,210.37 L13.50,210.35 L14.88,210.37 L16.26,210.44 L17.64,210.55 L19.02,210.72 L20.41,210.94 L21.79,211.23 M11.77,206.20 L11.63,207.60 L11.51,209.00 L11.43,210.40 L11.37,211.80 L11.34,213.20 L11.32,214.60 L11.34,216.00 L11.37,217.40 L11.43,218.80 L11.51,220.20 L11.63,221.60 L11.77,223.00 M4.90,212.91 L6.33,212.77 L7.77,212.66 L9.20,212.58 L10.63,212.52 L12.07,212.49 L13.50,212.47 L14.93,212.49 L16.37,212.52 L17.80,212.58 L19.23,212.66 L20.67,212.77 L22.10,212.91 M13.50,206.10 L13.50,207.52 L13.50,208.93 L13.50,210.35 L13.50,211.77 L13.50,213.18 L13.50,214.60 L13.50,216.02 L13.50,217.43 L13.50,218.85 L13.50,220.27 L13.50,221.68 L13.50,223.10 M4.80,214.60 L6.25,214.60 L7.70,214.60 L9.15,214.60 L10.60,214.60 L12.05,214.60 L13.50,214.60 L14.95,214.60 L16.40,214.60 L17.85,214.60 L19.30,214.60 L20.75,214.60 L22.20,214.60 M15.23,206.20 L15.37,207.60 L15.49,209.00 L15.57,210.40 L15.63,211.80 L15.66,213.20 L15.68,214.60 L15.66,216.00 L15.63,217.40 L15.57,218.80 L15.49,220.20 L15.37,221.60 L15.23,223.00 M4.90,216.29 L6.33,216.43 L7.77,216.54 L9.20,216.62 L10.63,216.68 L12.07,216.71 L13.50,216.72 L14.93,216.71 L16.37,216.68 L17.80,216.62 L19.23,216.54 L20.67,216.43 L22.10,216.29 M16.95,206.50 L17.25,207.85 L17.48,209.20 L17.64,210.55 L17.76,211.90 L17.83,213.25 L17.85,214.60 L17.83,215.95 L17.76,217.30 L17.64,218.65 L17.48,220.00 L17.25,221.35 L16.95,222.70 M5.21,217.97 L6.59,218.26 L7.98,218.48 L9.36,218.65 L10.74,218.76 L12.12,218.83 L13.50,218.85 L14.88,218.83 L16.26,218.76 L17.64,218.65 L19.02,218.48 L20.41,218.26 L21.79,217.97 M18.68,207.04 L19.12,208.30 L19.46,209.56 L19.72,210.82 L19.89,212.08 L19.99,213.34 L20.02,214.60 L19.99,215.86 L19.89,217.12 L19.72,218.38 L19.46,219.64 L19.12,220.90 L18.68,222.16 M5.76,219.66 L7.05,220.09 L8.34,220.43 L9.63,220.67 L10.92,220.84 L12.21,220.94 L13.50,220.97 L14.79,220.94 L16.08,220.84 L17.37,220.67 L18.66,220.43 L19.95,220.09 L21.24,219.66 M20.40,207.86 L21.00,208.98 L21.45,210.10 L21.79,211.23 L22.02,212.35 L22.16,213.48 L22.20,214.60 L22.16,215.72 L22.02,216.85 L21.79,217.97 L21.45,219.10 L21.00,220.22 L20.40,221.34 M6.60,221.34 L7.75,221.93 L8.90,222.37 L10.05,222.70 L11.20,222.92 L12.35,223.06 L13.50,223.10 L14.65,223.06 L15.80,222.92 L16.95,222.70 L18.10,222.37 L19.25,221.93 L20.40,221.34 " fill="none" stroke="#989898" stroke-width="0.55"/><path d="M4.70,228.90 L5.13,230.35 L5.48,231.80 L5.76,233.25 L5.95,234.70 L6.07,236.15 L6.11,237.60 L6.07,239.05 L5.95,240.50 L5.76,241.95 L5.48,243.40 L5.13,244.85 L4.70,246.30 M4.70,228.90 L6.17,229.33 L7.63,229.67 L9.10,229.94 L10.57,230.14 L12.03,230.25 L13.50,230.29 L14.97,230.25 L16.43,230.14 L17.90,229.94 L19.37,229.67 L20.83,229.33 L22.30,228.90 M6.90,229.51 L7.22,230.86 L7.49,232.21 L7.69,233.55 L7.84,234.90 L7.93,236.25 L7.96,237.60 L7.93,238.95 L7.84,240.30 L7.69,241.65 L7.49,242.99 L7.22,244.34 L6.90,245.69 M5.32,231.07 L6.68,231.39 L8.04,231.66 L9.41,231.86 L10.77,232.00 L12.14,232.09 L13.50,232.12 L14.86,232.09 L16.23,232.00 L17.59,231.86 L18.96,231.66 L20.32,231.39 L21.68,231.07 M9.10,229.94 L9.32,231.22 L9.49,232.50 L9.63,233.77 L9.73,235.05 L9.78,236.32 L9.80,237.60 L9.78,238.88 L9.73,240.15 L9.63,241.43 L9.49,242.70 L9.32,243.98 L9.10,245.26 M5.76,233.25 L7.05,233.46 L8.34,233.64 L9.63,233.77 L10.92,233.87 L12.21,233.93 L13.50,233.95 L14.79,233.93 L16.08,233.87 L17.37,233.77 L18.66,233.64 L19.95,233.46 L21.24,233.25 M11.30,230.20 L11.41,231.44 L11.50,232.67 L11.56,233.90 L11.61,235.13 L11.64,236.37 L11.65,237.60 L11.64,238.83 L11.61,240.06 L11.56,241.30 L11.50,242.53 L11.41,243.76 L11.30,245.00 M6.02,235.42 L7.27,235.53 L8.51,235.62 L9.76,235.69 L11.01,235.73 L12.25,235.76 L13.50,235.77 L14.75,235.76 L15.99,235.73 L17.24,235.69 L18.49,235.62 L19.73,235.53 L20.98,235.42 M13.50,230.29 L13.50,231.51 L13.50,232.73 L13.50,233.95 L13.50,235.16 L13.50,236.38 L13.50,237.60 L13.50,238.82 L13.50,240.04 L13.50,241.25 L13.50,242.47 L13.50,243.69 L13.50,244.91 M6.11,237.60 L7.34,237.60 L8.57,237.60 L9.80,237.60 L11.04,237.60 L12.27,237.60 L13.50,237.60 L14.73,237.60 L15.96,237.60 L17.20,237.60 L18.43,237.60 L19.66,237.60 L20.89,237.60 M15.70,230.20 L15.59,231.44 L15.50,232.67 L15.44,233.90 L15.39,235.13 L15.36,236.37 L15.35,237.60 L15.36,238.83 L15.39,240.06 L15.44,241.30 L15.50,242.53 L15.59,243.76 L15.70,245.00 M6.02,239.78 L7.27,239.67 L8.51,239.58 L9.76,239.51 L11.01,239.47 L12.25,239.44 L13.50,239.43 L14.75,239.44 L15.99,239.47 L17.24,239.51 L18.49,239.58 L19.73,239.67 L20.98,239.78 M17.90,229.94 L17.68,231.22 L17.51,232.50 L17.37,233.77 L17.27,235.05 L17.22,236.32 L17.20,237.60 L17.22,238.88 L17.27,240.15 L17.37,241.43 L17.51,242.70 L17.68,243.98 L17.90,245.26 M5.76,241.95 L7.05,241.74 L8.34,241.56 L9.63,241.43 L10.92,241.33 L12.21,241.27 L13.50,241.25 L14.79,241.27 L16.08,241.33 L17.37,241.43 L18.66,241.56 L19.95,241.74 L21.24,241.95 M20.10,229.51 L19.78,230.86 L19.51,232.21 L19.31,233.55 L19.16,234.90 L19.07,236.25 L19.04,237.60 L19.07,238.95 L19.16,240.30 L19.31,241.65 L19.51,242.99 L19.78,244.34 L20.10,245.69 M5.32,244.12 L6.68,243.81 L8.04,243.54 L9.41,243.34 L10.77,243.20 L12.14,243.11 L13.50,243.08 L14.86,243.11 L16.23,243.20 L17.59,243.34 L18.96,243.54 L20.32,243.81 L21.68,244.12 M22.30,228.90 L21.87,230.35 L21.52,231.80 L21.24,233.25 L21.05,234.70 L20.93,236.15 L20.89,237.60 L20.93,239.05 L21.05,240.50 L21.24,241.95 L21.52,243.40 L21.87,244.85 L22.30,246.30 M4.70,246.30 L6.17,245.87 L7.63,245.53 L9.10,245.26 L10.57,245.06 L12.03,244.95 L13.50,244.91 L14.97,244.95 L16.43,245.06 L17.90,245.26 L19.37,245.53 L20.83,245.87 L22.30,246.30 " fill="none" stroke="#989898" stroke-width="0.55"/><path d="M4.8,252.40000000000003 L6.8,255.00000000000003 L9.4,252.40000000000003 V268.6 L4.8,264.40000000000003 Z" fill="#8e8e8e"/><path d="M22.2,254.60000000000002 L20.2,252.20000000000002 L18,254.60000000000002 V268.6 L22.2,264.40000000000003 Z" fill="#8e8e8e"/><rect x="10.1" y="265.0" width="7" height="4" fill="#8e8e8e"/><circle cx="13.5" cy="259.6" r="2.9" fill="none" stroke="#8e8e8e" stroke-width="1"/><path d="M4.8,279 L9.5,274.4 V291.6 L4.8,287 Z" fill="#8e8e8e"/><path d="M22.2,279 L17.6,274.4 V291.6 L22.2,287 Z" fill="#8e8e8e"/><rect x="10.1" y="274.5" width="7" height="4" fill="#8e8e8e"/><rect x="10.1" y="287.6" width="7" height="4.1" fill="#8e8e8e"/><circle cx="13.5" cy="283" r="2.9" fill="none" stroke="#8e8e8e" stroke-width="1"/><circle cx="13.7" cy="323.8" r="2.6" fill="#a4a4a4"/><path d="M13.7,324 V335.4" stroke="#a4a4a4" stroke-width="0.9"/><path d="M6.6,346.6 Q13.5,342.4 20.6,346.6 Q20,354.6 13.5,358.6 Q7,354.6 6.6,346.6 Z" fill="none" stroke="#a0a0a0" stroke-width="1.3"/><path d="M8.6,351.8 L18.6,346.8" stroke="#a0a0a0" stroke-width="1.2"/><circle cx="13.6" cy="388.7" r="1.5" fill="#a8a8a8"/><path d="M7,413.6 L20,408.8" stroke="#f55f00" stroke-width="1.5"/><circle cx="7" cy="413.6" r="1.2" fill="#b0b0b0"/><circle cx="20" cy="408.8" r="1.2" fill="#b0b0b0"/><path d="M6.4,432.9 L16,426.9 L20.7,434 L10.4,439.7 Z" fill="#808080"/><circle cx="6.4" cy="432.9" r="1.2" fill="#c8c8c8"/><circle cx="16" cy="426.9" r="1.2" fill="#c8c8c8"/><circle cx="20.7" cy="434" r="1.2" fill="#c8c8c8"/><circle cx="10.4" cy="439.7" r="1.2" fill="#c8c8c8"/><g fill="none" stroke="#8e8e8e" stroke-width="0.75"><circle cx="13.7" cy="457" r="7.5"/><ellipse cx="13.7" cy="457" rx="3.4" ry="7.5"/><path d="M13.7,449.5 V464.5 M6.2,457 H21.2 M7.6,452.6 Q13.7,455 19.8,452.6 M7.6,461.4 Q13.7,459 19.8,461.4"/></g><rect x="5.6" y="486.9" width="15.9" height="13.9" rx="1.6" fill="none" stroke="#f55f00" stroke-width="1.5" stroke-dasharray="2.3 1.8"/><ellipse cx="13.4" cy="514.6" rx="7.4" ry="4.8" transform="rotate(-15 13.4 514.6)" fill="none" stroke="#a2a2a2" stroke-width="1" stroke-dasharray="2.2 1.8"/><circle cx="9.2" cy="520" r="1.4" fill="none" stroke="#a2a2a2" stroke-width="0.7"/><path d="M8.8,521.4 L7.7,524.4" stroke="#a2a2a2" stroke-width="0.9"/><path d="M5.2,533.6 L12.6,536.3 L20,532.6 L19.3,540 L9.6,542.2 Z" fill="none" stroke="#a2a2a2" stroke-width="1" stroke-dasharray="2.2 1.8"/><circle cx="9.7" cy="542.6" r="1.4" fill="none" stroke="#a2a2a2" stroke-width="0.7"/><path d="M9.2,544 L8.1,547.4" stroke="#a2a2a2" stroke-width="0.9"/><circle cx="13.1" cy="561.5" r="7.6" fill="none" stroke="#a2a2a2" stroke-width="1" stroke-dasharray="2.2 1.9"/><path d="M75.5,594 V578" stroke="#5fd040" stroke-width="1.5"/><path d="M75.5,573.5 l-1.8,5 h3.6 Z" fill="#5fd040"/><path d="M75.5,594 H91.5" stroke="#e05050" stroke-width="1.5"/><path d="M96.0,594 l-5,-1.8 v3.6 Z" fill="#e05050"/><circle cx="75.5" cy="594" r="1.6" fill="#2040e8"/><path d="M435.8,514.9 V498.9" stroke="#5fd040" stroke-width="1.5"/><path d="M435.8,494.4 l-1.8,5 h3.6 Z" fill="#5fd040"/><path d="M435.8,514.9 H451.8" stroke="#e05050" stroke-width="1.5"/><path d="M456.3,514.9 l-5,-1.8 v3.6 Z" fill="#e05050"/><circle cx="435.8" cy="514.9" r="1.6" fill="#2040e8"/></svg>
<div style="top:560.0px;height:12px;line-height:12px;font-size:9px;color:#5fd040;white-space:nowrap;left:-222px;width:600px;text-align:center;">y</div>
<div style="top:585.0px;height:12px;line-height:12px;font-size:9px;color:#e05050;white-space:nowrap;left:-197px;width:600px;text-align:center;">x</div>
<div style="top:480.5px;height:12px;line-height:12px;font-size:9px;color:#5fd040;white-space:nowrap;left:138px;width:600px;text-align:center;">v</div>
<div style="top:505.5px;height:12px;line-height:12px;font-size:9px;color:#e05050;white-space:nowrap;left:162.5px;width:600px;text-align:center;">u</div>
<div style="top:505.5px;height:12px;line-height:12px;font-size:8px;color:#2c40d0;white-space:nowrap;left:140.5px;width:600px;text-align:center;">w</div>
<div style="top:140.5px;height:12px;line-height:12px;font-size:8px;color:#d4d4d4;white-space:nowrap;left:88.5px;width:600px;text-align:center;">X</div>
<div style="top:140.5px;height:12px;line-height:12px;font-size:8px;color:#f0600a;white-space:nowrap;left:100px;width:600px;text-align:center;">Y</div>
</div></body></html>
